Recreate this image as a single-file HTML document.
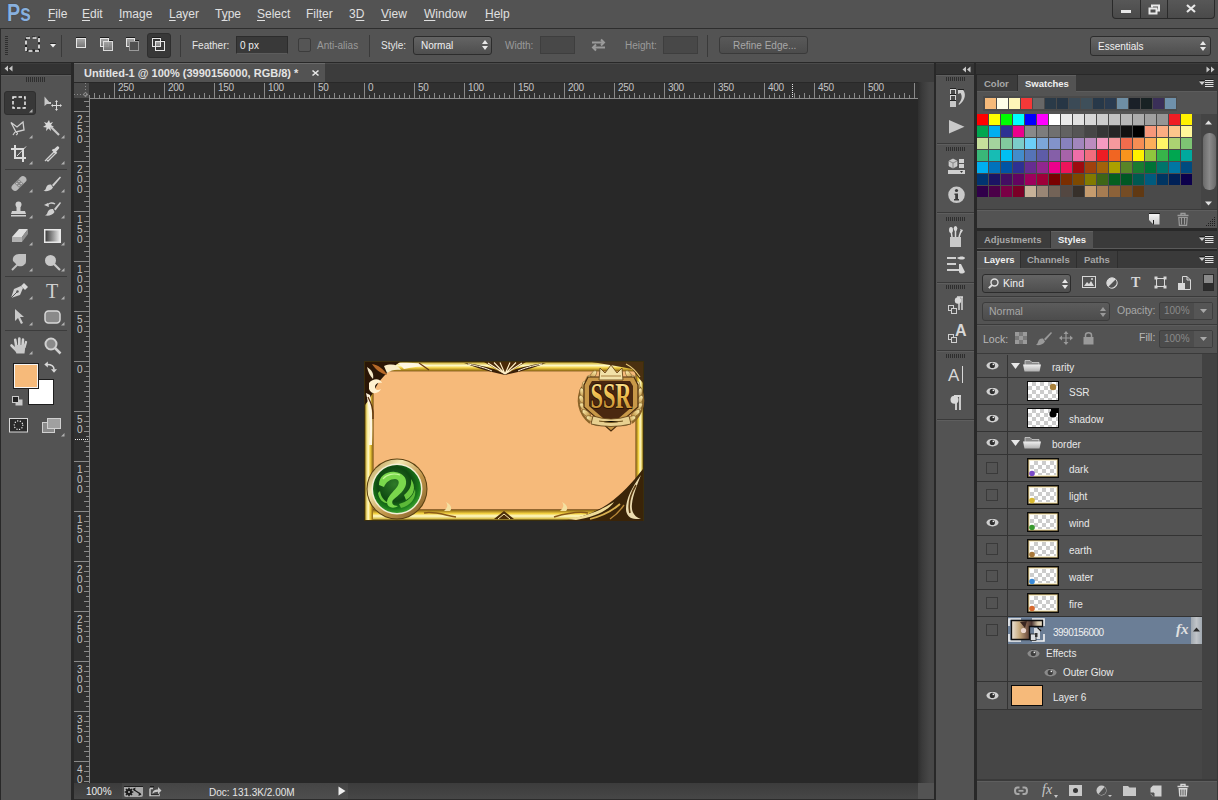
<!DOCTYPE html><html><head><meta charset="utf-8"><style>
*{margin:0;padding:0;box-sizing:border-box}
html,body{width:1218px;height:800px;overflow:hidden;background:#535353;font-family:"Liberation Sans",sans-serif;color:#d6d6d6;font-size:11px}
.a{position:absolute}
.t{position:absolute;white-space:nowrap;line-height:1}
svg{position:absolute;overflow:visible}
</style></head><body>
<div class="a" style="left:0px;top:0px;width:1218px;height:28px;background:#535353;"></div>
<div class="a" style="left:0px;top:28px;width:1218px;height:1px;background:#2e2e2e;"></div>
<div class="t" style="left:7px;top:2px;font-size:23px;color:#88b0dd;letter-spacing:-0.3px;transform:scaleX(.86);transform-origin:0 0;text-shadow:0 0 1px #223"><b>Ps</b></div>
<div class="t" style="left:48px;top:8px;font-size:12px;color:#e0e0e0;text-decoration-thickness:1px;text-underline-offset:2px"><u>F</u>ile</div>
<div class="t" style="left:82px;top:8px;font-size:12px;color:#e0e0e0;text-decoration-thickness:1px;text-underline-offset:2px"><u>E</u>dit</div>
<div class="t" style="left:119px;top:8px;font-size:12px;color:#e0e0e0;text-decoration-thickness:1px;text-underline-offset:2px"><u>I</u>mage</div>
<div class="t" style="left:169px;top:8px;font-size:12px;color:#e0e0e0;text-decoration-thickness:1px;text-underline-offset:2px"><u>L</u>ayer</div>
<div class="t" style="left:215px;top:8px;font-size:12px;color:#e0e0e0;text-decoration-thickness:1px;text-underline-offset:2px">T<u>y</u>pe</div>
<div class="t" style="left:257px;top:8px;font-size:12px;color:#e0e0e0;text-decoration-thickness:1px;text-underline-offset:2px"><u>S</u>elect</div>
<div class="t" style="left:306px;top:8px;font-size:12px;color:#e0e0e0;text-decoration-thickness:1px;text-underline-offset:2px">Fil<u>t</u>er</div>
<div class="t" style="left:349px;top:8px;font-size:12px;color:#e0e0e0;text-decoration-thickness:1px;text-underline-offset:2px">3<u>D</u></div>
<div class="t" style="left:381px;top:8px;font-size:12px;color:#e0e0e0;text-decoration-thickness:1px;text-underline-offset:2px"><u>V</u>iew</div>
<div class="t" style="left:424px;top:8px;font-size:12px;color:#e0e0e0;text-decoration-thickness:1px;text-underline-offset:2px"><u>W</u>indow</div>
<div class="t" style="left:485px;top:8px;font-size:12px;color:#e0e0e0;text-decoration-thickness:1px;text-underline-offset:2px"><u>H</u>elp</div>
<div class="a" style="left:1112px;top:-1px;width:103px;height:20px;background:linear-gradient(#585858,#4a4a4a);border:1px solid #2a2a2a;border-top:none;border-radius:0 0 4px 4px"></div>
<div class="a" style="left:1140px;top:0px;width:1px;height:18px;background:#2a2a2a;"></div>
<div class="a" style="left:1167px;top:0px;width:1px;height:18px;background:#2a2a2a;"></div>
<div class="a" style="left:1121px;top:10px;width:10px;height:3px;background:#e8e8e8;"></div>
<svg style="left:1148px;top:4px;" width="12" height="11" viewBox="0 0 12 11"><rect x="1.5" y="4.5" width="7" height="5" fill="none" stroke="#e8e8e8" stroke-width="2"/><path d="M4 3.5V1.5h7v5h-2" fill="none" stroke="#e8e8e8" stroke-width="2"/></svg>
<svg style="left:1186px;top:4px;" width="10" height="9" viewBox="0 0 10 9"><path d="M1 1L9 8M9 1L1 8" stroke="#e8e8e8" stroke-width="2.2"/></svg>
<div class="a" style="left:0px;top:29px;width:1218px;height:33px;background:#535353;"></div>
<div class="a" style="left:0px;top:29px;width:1px;height:33px;background:#2e2e2e;"></div>
<div class="a" style="left:0px;top:62px;width:1218px;height:1px;background:#282828;"></div>
<div class="a" style="left:5px;top:36px;width:3px;height:1px;background:#2e2e2e;"></div>
<div class="a" style="left:5px;top:38px;width:3px;height:1px;background:#2e2e2e;"></div>
<div class="a" style="left:5px;top:40px;width:3px;height:1px;background:#2e2e2e;"></div>
<div class="a" style="left:5px;top:42px;width:3px;height:1px;background:#2e2e2e;"></div>
<div class="a" style="left:5px;top:44px;width:3px;height:1px;background:#2e2e2e;"></div>
<div class="a" style="left:5px;top:46px;width:3px;height:1px;background:#2e2e2e;"></div>
<div class="a" style="left:5px;top:48px;width:3px;height:1px;background:#2e2e2e;"></div>
<div class="a" style="left:5px;top:50px;width:3px;height:1px;background:#2e2e2e;"></div>
<div class="a" style="left:5px;top:52px;width:3px;height:1px;background:#2e2e2e;"></div>
<div class="a" style="left:5px;top:54px;width:3px;height:1px;background:#2e2e2e;"></div>
<svg style="left:25px;top:37px;" width="15" height="15" viewBox="0 0 15 15"><rect x="1" y="1" width="13" height="13" fill="none" stroke="#1e1e1e" stroke-width="2" stroke-dasharray="3 3" transform="translate(0,-0.5)"/><rect x="1" y="1" width="13" height="13" fill="none" stroke="#f0f0f0" stroke-width="1.6" stroke-dasharray="4 2.5"/></svg>
<svg style="left:50px;top:43px;" width="6" height="5" viewBox="0 0 6 5"><rect x="0" y="0" width="6" height="1" fill="#2a2a2a"/><path d="M0 1H6L3 4.5Z" fill="#f0f0f0"/></svg>
<div class="a" style="left:61px;top:35px;width:1px;height:22px;background:#3a3a3a;"></div>
<svg style="left:75px;top:36px;" width="12" height="13" viewBox="0 0 12 13"><defs><linearGradient id="sg" x1="0" y1="0" x2="0" y2="1"><stop offset="0" stop-color="#a8a8a8"/><stop offset="1" stop-color="#747474"/></linearGradient></defs><rect x="1" y="1" width="10" height="1" fill="#1e1e1e"/><rect x="1.5" y="2.5" width="9" height="9" fill="url(#sg)" stroke="#e6e6e6"/></svg>
<svg style="left:99px;top:36px;" width="15" height="16" viewBox="0 0 15 16"><rect x="1" y="1" width="9" height="1" fill="#1e1e1e"/><rect x="10" y="4" width="4" height="1" fill="#1e1e1e"/><rect x="1.5" y="2.5" width="8" height="8" fill="url(#sg)" stroke="#e6e6e6"/><rect x="4.5" y="5.5" width="9" height="9" fill="url(#sg)" stroke="#e6e6e6" opacity=".92"/></svg>
<svg style="left:125px;top:36px;" width="15" height="16" viewBox="0 0 15 16"><rect x="1" y="1" width="9" height="1" fill="#1e1e1e"/><rect x="10" y="4" width="4" height="1" fill="#1e1e1e"/><rect x="1.5" y="2.5" width="8" height="8" fill="url(#sg)" stroke="#e6e6e6"/><rect x="4.5" y="5.5" width="9" height="9" fill="#505050" stroke="#9a9a9a"/></svg>
<div class="a" style="left:147px;top:33px;width:24px;height:25px;background:#383838;border:1px solid #2e2e2e;border-radius:3px"></div>
<svg style="left:151px;top:36px;" width="15" height="16" viewBox="0 0 15 16"><rect x="1" y="1" width="9" height="1" fill="#1e1e1e"/><rect x="10" y="4" width="4" height="1" fill="#1e1e1e"/><rect x="5" y="6" width="5" height="5" fill="url(#sg)"/><rect x="1.5" y="2.5" width="8" height="8" fill="none" stroke="#e6e6e6"/><rect x="4.5" y="5.5" width="9" height="9" fill="none" stroke="#e6e6e6"/></svg>
<div class="a" style="left:180px;top:35px;width:1px;height:22px;background:#3a3a3a;"></div>
<div class="t" style="left:192px;top:41px;font-size:10px;color:#e6e6e6;">Feather:</div>
<div class="a" style="left:236px;top:36px;width:52px;height:18px;background:#393939;border:1px solid #2c2c2c;border-bottom-color:#5c5c5c"></div>
<div class="t" style="left:240px;top:41px;font-size:10px;color:#f0f0f0;">0 px</div>
<div class="a" style="left:298px;top:38px;width:13px;height:14px;background:#555;border:1px solid #3c3c3c;border-radius:2px"></div>
<div class="t" style="left:317px;top:41px;font-size:10px;color:#9a9a9a;">Anti-alias</div>
<div class="a" style="left:369px;top:35px;width:1px;height:22px;background:#3a3a3a;"></div>
<div class="t" style="left:381px;top:41px;font-size:10px;color:#e6e6e6;">Style:</div>
<div class="a" style="left:413px;top:36px;width:79px;height:19px;background:linear-gradient(#646464,#4e4e4e);border:1px solid #2c2c2c;border-radius:3px"></div>
<div class="t" style="left:421px;top:41px;font-size:10px;color:#f0f0f0;">Normal</div>
<svg style="left:482px;top:39px;" width="6" height="12" viewBox="0 0 6 12"><path d="M0 5L3 1L6 5ZM0 7L3 11L6 7Z" fill="#e8e8e8"/></svg>
<div class="t" style="left:505px;top:41px;font-size:10px;color:#9a9a9a;">Width:</div>
<div class="a" style="left:540px;top:36px;width:35px;height:18px;background:#484848;border:1px solid #3e3e3e"></div>
<svg style="left:590px;top:38px;" width="17" height="14" viewBox="0 0 17 14"><path d="M2 4.5H14M11 1.5L14 4.5L11 7.5" fill="none" stroke="#9a9a9a" stroke-width="2"/><path d="M15 9.5H3M6 6.5L3 9.5L6 12.5" fill="none" stroke="#9a9a9a" stroke-width="2"/></svg>
<div class="t" style="left:625px;top:41px;font-size:10px;color:#9a9a9a;">Height:</div>
<div class="a" style="left:663px;top:36px;width:35px;height:18px;background:#484848;border:1px solid #3e3e3e"></div>
<div class="a" style="left:707px;top:35px;width:1px;height:22px;background:#3a3a3a;"></div>
<div class="a" style="left:719px;top:36px;width:89px;height:18px;background:linear-gradient(#595959,#4c4c4c);border:1px solid #3a3a3a;border-radius:3px"></div>
<div class="t" style="left:733px;top:41px;font-size:10px;color:#a8a8a8;">Refine Edge...</div>
<div class="a" style="left:1090px;top:36px;width:121px;height:20px;background:linear-gradient(#646464,#4e4e4e);border:1px solid #2c2c2c;border-radius:3px"></div>
<div class="t" style="left:1098px;top:42px;font-size:10px;color:#f0f0f0;">Essentials</div>
<svg style="left:1200px;top:40px;" width="6" height="12" viewBox="0 0 6 12"><path d="M0 5L3 1L6 5ZM0 7L3 11L6 7Z" fill="#e8e8e8"/></svg>
<div class="a" style="left:0px;top:63px;width:1218px;height:737px;background:#282828;"></div>
<div class="a" style="left:1px;top:63px;width:70px;height:11px;background:linear-gradient(#3c3c3c 0,#3c3c3c 1px,#333 1px);"></div>
<div class="a" style="left:1px;top:75px;width:70px;height:725px;background:linear-gradient(#5e5e5e 0,#5e5e5e 1px,#535353 1px);"></div>
<div class="a" style="left:74px;top:63px;width:860px;height:19px;background:linear-gradient(#4a4a4a 0,#4a4a4a 1px,#3c3c3c 1px);"></div>
<div class="a" style="left:74px;top:63px;width:251px;height:19px;background:linear-gradient(#6a6a6a 0,#6a6a6a 1px,#535353 1px);"></div>
<div class="t" style="left:84px;top:68px;font-size:11px;color:#e4e4e4;"><b>Untitled-1 @ 100% (3990156000, RGB/8) *</b></div>
<svg style="left:312px;top:70px;" width="7" height="6" viewBox="0 0 7 6"><path d="M0.5 0.5L6.5 5.5M6.5 0.5L0.5 5.5" stroke="#e8e8e8" stroke-width="1.6"/></svg>
<div class="a" style="left:74px;top:82px;width:844px;height:16px;background:#303030;"></div>
<div class="a" style="left:74px;top:82px;width:844px;height:1px;background:#282828;"></div>
<div class="a" style="left:74px;top:98px;width:15px;height:685px;background:#303030;"></div>
<div class="a" style="left:90px;top:99px;width:828px;height:684px;background:#282828;"></div>
<div class="a" style="left:74px;top:83px;width:15px;height:15px;background:#4a4a4a;"></div>
<svg style="left:74px;top:83px;" width="15" height="15" viewBox="0 0 15 15"><path d="M0 11.5H15M11.5 0V15" stroke="#8a8a8a" stroke-dasharray="1 2"/><rect x="10" y="10" width="3" height="3" fill="none" stroke="#8a8a8a" transform="rotate(45 11.5 11.5)"/></svg>
<div class="a" style="left:89px;top:98px;width:829px;height:1px;background:#8a8a8a;"></div>
<div class="a" style="left:89px;top:98px;width:1px;height:685px;background:#8a8a8a;"></div>
<svg style="left:89px;top:83px;" width="829" height="15" viewBox="0 0 829 15"><rect x="0" y="12" width="1" height="3" fill="#8a8a8a"/><rect x="5" y="10" width="1" height="5" fill="#8a8a8a"/><rect x="10" y="12" width="1" height="3" fill="#8a8a8a"/><rect x="15" y="10" width="1" height="5" fill="#8a8a8a"/><rect x="20" y="12" width="1" height="3" fill="#8a8a8a"/><rect x="25" y="0" width="1" height="15" fill="#8a8a8a"/><rect x="30" y="12" width="1" height="3" fill="#8a8a8a"/><rect x="35" y="10" width="1" height="5" fill="#8a8a8a"/><rect x="40" y="12" width="1" height="3" fill="#8a8a8a"/><rect x="45" y="10" width="1" height="5" fill="#8a8a8a"/><rect x="50" y="12" width="1" height="3" fill="#8a8a8a"/><rect x="55" y="10" width="1" height="5" fill="#8a8a8a"/><rect x="60" y="12" width="1" height="3" fill="#8a8a8a"/><rect x="65" y="10" width="1" height="5" fill="#8a8a8a"/><rect x="70" y="12" width="1" height="3" fill="#8a8a8a"/><rect x="75" y="0" width="1" height="15" fill="#8a8a8a"/><rect x="80" y="12" width="1" height="3" fill="#8a8a8a"/><rect x="85" y="10" width="1" height="5" fill="#8a8a8a"/><rect x="90" y="12" width="1" height="3" fill="#8a8a8a"/><rect x="95" y="10" width="1" height="5" fill="#8a8a8a"/><rect x="100" y="12" width="1" height="3" fill="#8a8a8a"/><rect x="105" y="10" width="1" height="5" fill="#8a8a8a"/><rect x="110" y="12" width="1" height="3" fill="#8a8a8a"/><rect x="115" y="10" width="1" height="5" fill="#8a8a8a"/><rect x="120" y="12" width="1" height="3" fill="#8a8a8a"/><rect x="125" y="0" width="1" height="15" fill="#8a8a8a"/><rect x="130" y="12" width="1" height="3" fill="#8a8a8a"/><rect x="135" y="10" width="1" height="5" fill="#8a8a8a"/><rect x="140" y="12" width="1" height="3" fill="#8a8a8a"/><rect x="145" y="10" width="1" height="5" fill="#8a8a8a"/><rect x="150" y="12" width="1" height="3" fill="#8a8a8a"/><rect x="155" y="10" width="1" height="5" fill="#8a8a8a"/><rect x="160" y="12" width="1" height="3" fill="#8a8a8a"/><rect x="165" y="10" width="1" height="5" fill="#8a8a8a"/><rect x="170" y="12" width="1" height="3" fill="#8a8a8a"/><rect x="175" y="0" width="1" height="15" fill="#8a8a8a"/><rect x="180" y="12" width="1" height="3" fill="#8a8a8a"/><rect x="185" y="10" width="1" height="5" fill="#8a8a8a"/><rect x="190" y="12" width="1" height="3" fill="#8a8a8a"/><rect x="195" y="10" width="1" height="5" fill="#8a8a8a"/><rect x="200" y="12" width="1" height="3" fill="#8a8a8a"/><rect x="205" y="10" width="1" height="5" fill="#8a8a8a"/><rect x="210" y="12" width="1" height="3" fill="#8a8a8a"/><rect x="215" y="10" width="1" height="5" fill="#8a8a8a"/><rect x="220" y="12" width="1" height="3" fill="#8a8a8a"/><rect x="225" y="0" width="1" height="15" fill="#8a8a8a"/><rect x="230" y="12" width="1" height="3" fill="#8a8a8a"/><rect x="235" y="10" width="1" height="5" fill="#8a8a8a"/><rect x="240" y="12" width="1" height="3" fill="#8a8a8a"/><rect x="245" y="10" width="1" height="5" fill="#8a8a8a"/><rect x="250" y="12" width="1" height="3" fill="#8a8a8a"/><rect x="255" y="10" width="1" height="5" fill="#8a8a8a"/><rect x="260" y="12" width="1" height="3" fill="#8a8a8a"/><rect x="265" y="10" width="1" height="5" fill="#8a8a8a"/><rect x="270" y="12" width="1" height="3" fill="#8a8a8a"/><rect x="275" y="0" width="1" height="15" fill="#8a8a8a"/><rect x="280" y="12" width="1" height="3" fill="#8a8a8a"/><rect x="285" y="10" width="1" height="5" fill="#8a8a8a"/><rect x="290" y="12" width="1" height="3" fill="#8a8a8a"/><rect x="295" y="10" width="1" height="5" fill="#8a8a8a"/><rect x="300" y="12" width="1" height="3" fill="#8a8a8a"/><rect x="305" y="10" width="1" height="5" fill="#8a8a8a"/><rect x="310" y="12" width="1" height="3" fill="#8a8a8a"/><rect x="315" y="10" width="1" height="5" fill="#8a8a8a"/><rect x="320" y="12" width="1" height="3" fill="#8a8a8a"/><rect x="325" y="0" width="1" height="15" fill="#8a8a8a"/><rect x="330" y="12" width="1" height="3" fill="#8a8a8a"/><rect x="335" y="10" width="1" height="5" fill="#8a8a8a"/><rect x="340" y="12" width="1" height="3" fill="#8a8a8a"/><rect x="345" y="10" width="1" height="5" fill="#8a8a8a"/><rect x="350" y="12" width="1" height="3" fill="#8a8a8a"/><rect x="355" y="10" width="1" height="5" fill="#8a8a8a"/><rect x="360" y="12" width="1" height="3" fill="#8a8a8a"/><rect x="365" y="10" width="1" height="5" fill="#8a8a8a"/><rect x="370" y="12" width="1" height="3" fill="#8a8a8a"/><rect x="375" y="0" width="1" height="15" fill="#8a8a8a"/><rect x="380" y="12" width="1" height="3" fill="#8a8a8a"/><rect x="385" y="10" width="1" height="5" fill="#8a8a8a"/><rect x="390" y="12" width="1" height="3" fill="#8a8a8a"/><rect x="395" y="10" width="1" height="5" fill="#8a8a8a"/><rect x="400" y="12" width="1" height="3" fill="#8a8a8a"/><rect x="405" y="10" width="1" height="5" fill="#8a8a8a"/><rect x="410" y="12" width="1" height="3" fill="#8a8a8a"/><rect x="415" y="10" width="1" height="5" fill="#8a8a8a"/><rect x="420" y="12" width="1" height="3" fill="#8a8a8a"/><rect x="425" y="0" width="1" height="15" fill="#8a8a8a"/><rect x="430" y="12" width="1" height="3" fill="#8a8a8a"/><rect x="435" y="10" width="1" height="5" fill="#8a8a8a"/><rect x="440" y="12" width="1" height="3" fill="#8a8a8a"/><rect x="445" y="10" width="1" height="5" fill="#8a8a8a"/><rect x="450" y="12" width="1" height="3" fill="#8a8a8a"/><rect x="455" y="10" width="1" height="5" fill="#8a8a8a"/><rect x="460" y="12" width="1" height="3" fill="#8a8a8a"/><rect x="465" y="10" width="1" height="5" fill="#8a8a8a"/><rect x="470" y="12" width="1" height="3" fill="#8a8a8a"/><rect x="475" y="0" width="1" height="15" fill="#8a8a8a"/><rect x="480" y="12" width="1" height="3" fill="#8a8a8a"/><rect x="485" y="10" width="1" height="5" fill="#8a8a8a"/><rect x="490" y="12" width="1" height="3" fill="#8a8a8a"/><rect x="495" y="10" width="1" height="5" fill="#8a8a8a"/><rect x="500" y="12" width="1" height="3" fill="#8a8a8a"/><rect x="505" y="10" width="1" height="5" fill="#8a8a8a"/><rect x="510" y="12" width="1" height="3" fill="#8a8a8a"/><rect x="515" y="10" width="1" height="5" fill="#8a8a8a"/><rect x="520" y="12" width="1" height="3" fill="#8a8a8a"/><rect x="525" y="0" width="1" height="15" fill="#8a8a8a"/><rect x="530" y="12" width="1" height="3" fill="#8a8a8a"/><rect x="535" y="10" width="1" height="5" fill="#8a8a8a"/><rect x="540" y="12" width="1" height="3" fill="#8a8a8a"/><rect x="545" y="10" width="1" height="5" fill="#8a8a8a"/><rect x="550" y="12" width="1" height="3" fill="#8a8a8a"/><rect x="555" y="10" width="1" height="5" fill="#8a8a8a"/><rect x="560" y="12" width="1" height="3" fill="#8a8a8a"/><rect x="565" y="10" width="1" height="5" fill="#8a8a8a"/><rect x="570" y="12" width="1" height="3" fill="#8a8a8a"/><rect x="575" y="0" width="1" height="15" fill="#8a8a8a"/><rect x="580" y="12" width="1" height="3" fill="#8a8a8a"/><rect x="585" y="10" width="1" height="5" fill="#8a8a8a"/><rect x="590" y="12" width="1" height="3" fill="#8a8a8a"/><rect x="595" y="10" width="1" height="5" fill="#8a8a8a"/><rect x="600" y="12" width="1" height="3" fill="#8a8a8a"/><rect x="605" y="10" width="1" height="5" fill="#8a8a8a"/><rect x="610" y="12" width="1" height="3" fill="#8a8a8a"/><rect x="615" y="10" width="1" height="5" fill="#8a8a8a"/><rect x="620" y="12" width="1" height="3" fill="#8a8a8a"/><rect x="625" y="0" width="1" height="15" fill="#8a8a8a"/><rect x="630" y="12" width="1" height="3" fill="#8a8a8a"/><rect x="635" y="10" width="1" height="5" fill="#8a8a8a"/><rect x="640" y="12" width="1" height="3" fill="#8a8a8a"/><rect x="645" y="10" width="1" height="5" fill="#8a8a8a"/><rect x="650" y="12" width="1" height="3" fill="#8a8a8a"/><rect x="655" y="10" width="1" height="5" fill="#8a8a8a"/><rect x="660" y="12" width="1" height="3" fill="#8a8a8a"/><rect x="665" y="10" width="1" height="5" fill="#8a8a8a"/><rect x="670" y="12" width="1" height="3" fill="#8a8a8a"/><rect x="675" y="0" width="1" height="15" fill="#8a8a8a"/><rect x="680" y="12" width="1" height="3" fill="#8a8a8a"/><rect x="685" y="10" width="1" height="5" fill="#8a8a8a"/><rect x="690" y="12" width="1" height="3" fill="#8a8a8a"/><rect x="695" y="10" width="1" height="5" fill="#8a8a8a"/><rect x="700" y="12" width="1" height="3" fill="#8a8a8a"/><rect x="705" y="10" width="1" height="5" fill="#8a8a8a"/><rect x="710" y="12" width="1" height="3" fill="#8a8a8a"/><rect x="715" y="10" width="1" height="5" fill="#8a8a8a"/><rect x="720" y="12" width="1" height="3" fill="#8a8a8a"/><rect x="725" y="0" width="1" height="15" fill="#8a8a8a"/><rect x="730" y="12" width="1" height="3" fill="#8a8a8a"/><rect x="735" y="10" width="1" height="5" fill="#8a8a8a"/><rect x="740" y="12" width="1" height="3" fill="#8a8a8a"/><rect x="745" y="10" width="1" height="5" fill="#8a8a8a"/><rect x="750" y="12" width="1" height="3" fill="#8a8a8a"/><rect x="755" y="10" width="1" height="5" fill="#8a8a8a"/><rect x="760" y="12" width="1" height="3" fill="#8a8a8a"/><rect x="765" y="10" width="1" height="5" fill="#8a8a8a"/><rect x="770" y="12" width="1" height="3" fill="#8a8a8a"/><rect x="775" y="0" width="1" height="15" fill="#8a8a8a"/><rect x="780" y="12" width="1" height="3" fill="#8a8a8a"/><rect x="785" y="10" width="1" height="5" fill="#8a8a8a"/><rect x="790" y="12" width="1" height="3" fill="#8a8a8a"/><rect x="795" y="10" width="1" height="5" fill="#8a8a8a"/><rect x="800" y="12" width="1" height="3" fill="#8a8a8a"/><rect x="805" y="10" width="1" height="5" fill="#8a8a8a"/><rect x="810" y="12" width="1" height="3" fill="#8a8a8a"/><rect x="815" y="10" width="1" height="5" fill="#8a8a8a"/><rect x="820" y="12" width="1" height="3" fill="#8a8a8a"/><rect x="825" y="0" width="1" height="15" fill="#8a8a8a"/></svg>
<div class="t" style="left:118px;top:83px;font-size:10px;color:#c4c4c4;letter-spacing:-0.3px">250</div>
<div class="t" style="left:168px;top:83px;font-size:10px;color:#c4c4c4;letter-spacing:-0.3px">200</div>
<div class="t" style="left:218px;top:83px;font-size:10px;color:#c4c4c4;letter-spacing:-0.3px">150</div>
<div class="t" style="left:268px;top:83px;font-size:10px;color:#c4c4c4;letter-spacing:-0.3px">100</div>
<div class="t" style="left:318px;top:83px;font-size:10px;color:#c4c4c4;letter-spacing:-0.3px">50</div>
<div class="t" style="left:368px;top:83px;font-size:10px;color:#c4c4c4;letter-spacing:-0.3px">0</div>
<div class="t" style="left:418px;top:83px;font-size:10px;color:#c4c4c4;letter-spacing:-0.3px">50</div>
<div class="t" style="left:468px;top:83px;font-size:10px;color:#c4c4c4;letter-spacing:-0.3px">100</div>
<div class="t" style="left:518px;top:83px;font-size:10px;color:#c4c4c4;letter-spacing:-0.3px">150</div>
<div class="t" style="left:568px;top:83px;font-size:10px;color:#c4c4c4;letter-spacing:-0.3px">200</div>
<div class="t" style="left:618px;top:83px;font-size:10px;color:#c4c4c4;letter-spacing:-0.3px">250</div>
<div class="t" style="left:668px;top:83px;font-size:10px;color:#c4c4c4;letter-spacing:-0.3px">300</div>
<div class="t" style="left:718px;top:83px;font-size:10px;color:#c4c4c4;letter-spacing:-0.3px">350</div>
<div class="t" style="left:768px;top:83px;font-size:10px;color:#c4c4c4;letter-spacing:-0.3px">400</div>
<div class="t" style="left:818px;top:83px;font-size:10px;color:#c4c4c4;letter-spacing:-0.3px">450</div>
<div class="t" style="left:868px;top:83px;font-size:10px;color:#c4c4c4;letter-spacing:-0.3px">500</div>
<svg style="left:74px;top:98px;" width="15" height="685" viewBox="0 0 15 685"><rect x="10" y="3" width="5" height="1" fill="#8a8a8a"/><rect x="12" y="8" width="3" height="1" fill="#8a8a8a"/><rect x="0" y="13" width="15" height="1" fill="#8a8a8a"/><rect x="12" y="18" width="3" height="1" fill="#8a8a8a"/><rect x="10" y="23" width="5" height="1" fill="#8a8a8a"/><rect x="12" y="28" width="3" height="1" fill="#8a8a8a"/><rect x="10" y="33" width="5" height="1" fill="#8a8a8a"/><rect x="12" y="38" width="3" height="1" fill="#8a8a8a"/><rect x="10" y="43" width="5" height="1" fill="#8a8a8a"/><rect x="12" y="48" width="3" height="1" fill="#8a8a8a"/><rect x="10" y="53" width="5" height="1" fill="#8a8a8a"/><rect x="12" y="58" width="3" height="1" fill="#8a8a8a"/><rect x="0" y="63" width="15" height="1" fill="#8a8a8a"/><rect x="12" y="68" width="3" height="1" fill="#8a8a8a"/><rect x="10" y="73" width="5" height="1" fill="#8a8a8a"/><rect x="12" y="78" width="3" height="1" fill="#8a8a8a"/><rect x="10" y="83" width="5" height="1" fill="#8a8a8a"/><rect x="12" y="88" width="3" height="1" fill="#8a8a8a"/><rect x="10" y="93" width="5" height="1" fill="#8a8a8a"/><rect x="12" y="98" width="3" height="1" fill="#8a8a8a"/><rect x="10" y="103" width="5" height="1" fill="#8a8a8a"/><rect x="12" y="108" width="3" height="1" fill="#8a8a8a"/><rect x="0" y="113" width="15" height="1" fill="#8a8a8a"/><rect x="12" y="118" width="3" height="1" fill="#8a8a8a"/><rect x="10" y="123" width="5" height="1" fill="#8a8a8a"/><rect x="12" y="128" width="3" height="1" fill="#8a8a8a"/><rect x="10" y="133" width="5" height="1" fill="#8a8a8a"/><rect x="12" y="138" width="3" height="1" fill="#8a8a8a"/><rect x="10" y="143" width="5" height="1" fill="#8a8a8a"/><rect x="12" y="148" width="3" height="1" fill="#8a8a8a"/><rect x="10" y="153" width="5" height="1" fill="#8a8a8a"/><rect x="12" y="158" width="3" height="1" fill="#8a8a8a"/><rect x="0" y="163" width="15" height="1" fill="#8a8a8a"/><rect x="12" y="168" width="3" height="1" fill="#8a8a8a"/><rect x="10" y="173" width="5" height="1" fill="#8a8a8a"/><rect x="12" y="178" width="3" height="1" fill="#8a8a8a"/><rect x="10" y="183" width="5" height="1" fill="#8a8a8a"/><rect x="12" y="188" width="3" height="1" fill="#8a8a8a"/><rect x="10" y="193" width="5" height="1" fill="#8a8a8a"/><rect x="12" y="198" width="3" height="1" fill="#8a8a8a"/><rect x="10" y="203" width="5" height="1" fill="#8a8a8a"/><rect x="12" y="208" width="3" height="1" fill="#8a8a8a"/><rect x="0" y="213" width="15" height="1" fill="#8a8a8a"/><rect x="12" y="218" width="3" height="1" fill="#8a8a8a"/><rect x="10" y="223" width="5" height="1" fill="#8a8a8a"/><rect x="12" y="228" width="3" height="1" fill="#8a8a8a"/><rect x="10" y="233" width="5" height="1" fill="#8a8a8a"/><rect x="12" y="238" width="3" height="1" fill="#8a8a8a"/><rect x="10" y="243" width="5" height="1" fill="#8a8a8a"/><rect x="12" y="248" width="3" height="1" fill="#8a8a8a"/><rect x="10" y="253" width="5" height="1" fill="#8a8a8a"/><rect x="12" y="258" width="3" height="1" fill="#8a8a8a"/><rect x="0" y="263" width="15" height="1" fill="#8a8a8a"/><rect x="12" y="268" width="3" height="1" fill="#8a8a8a"/><rect x="10" y="273" width="5" height="1" fill="#8a8a8a"/><rect x="12" y="278" width="3" height="1" fill="#8a8a8a"/><rect x="10" y="283" width="5" height="1" fill="#8a8a8a"/><rect x="12" y="288" width="3" height="1" fill="#8a8a8a"/><rect x="10" y="293" width="5" height="1" fill="#8a8a8a"/><rect x="12" y="298" width="3" height="1" fill="#8a8a8a"/><rect x="10" y="303" width="5" height="1" fill="#8a8a8a"/><rect x="12" y="308" width="3" height="1" fill="#8a8a8a"/><rect x="0" y="313" width="15" height="1" fill="#8a8a8a"/><rect x="12" y="318" width="3" height="1" fill="#8a8a8a"/><rect x="10" y="323" width="5" height="1" fill="#8a8a8a"/><rect x="12" y="328" width="3" height="1" fill="#8a8a8a"/><rect x="10" y="333" width="5" height="1" fill="#8a8a8a"/><rect x="12" y="338" width="3" height="1" fill="#8a8a8a"/><rect x="10" y="343" width="5" height="1" fill="#8a8a8a"/><rect x="12" y="348" width="3" height="1" fill="#8a8a8a"/><rect x="10" y="353" width="5" height="1" fill="#8a8a8a"/><rect x="12" y="358" width="3" height="1" fill="#8a8a8a"/><rect x="0" y="363" width="15" height="1" fill="#8a8a8a"/><rect x="12" y="368" width="3" height="1" fill="#8a8a8a"/><rect x="10" y="373" width="5" height="1" fill="#8a8a8a"/><rect x="12" y="378" width="3" height="1" fill="#8a8a8a"/><rect x="10" y="383" width="5" height="1" fill="#8a8a8a"/><rect x="12" y="388" width="3" height="1" fill="#8a8a8a"/><rect x="10" y="393" width="5" height="1" fill="#8a8a8a"/><rect x="12" y="398" width="3" height="1" fill="#8a8a8a"/><rect x="10" y="403" width="5" height="1" fill="#8a8a8a"/><rect x="12" y="408" width="3" height="1" fill="#8a8a8a"/><rect x="0" y="413" width="15" height="1" fill="#8a8a8a"/><rect x="12" y="418" width="3" height="1" fill="#8a8a8a"/><rect x="10" y="423" width="5" height="1" fill="#8a8a8a"/><rect x="12" y="428" width="3" height="1" fill="#8a8a8a"/><rect x="10" y="433" width="5" height="1" fill="#8a8a8a"/><rect x="12" y="438" width="3" height="1" fill="#8a8a8a"/><rect x="10" y="443" width="5" height="1" fill="#8a8a8a"/><rect x="12" y="448" width="3" height="1" fill="#8a8a8a"/><rect x="10" y="453" width="5" height="1" fill="#8a8a8a"/><rect x="12" y="458" width="3" height="1" fill="#8a8a8a"/><rect x="0" y="463" width="15" height="1" fill="#8a8a8a"/><rect x="12" y="468" width="3" height="1" fill="#8a8a8a"/><rect x="10" y="473" width="5" height="1" fill="#8a8a8a"/><rect x="12" y="478" width="3" height="1" fill="#8a8a8a"/><rect x="10" y="483" width="5" height="1" fill="#8a8a8a"/><rect x="12" y="488" width="3" height="1" fill="#8a8a8a"/><rect x="10" y="493" width="5" height="1" fill="#8a8a8a"/><rect x="12" y="498" width="3" height="1" fill="#8a8a8a"/><rect x="10" y="503" width="5" height="1" fill="#8a8a8a"/><rect x="12" y="508" width="3" height="1" fill="#8a8a8a"/><rect x="0" y="513" width="15" height="1" fill="#8a8a8a"/><rect x="12" y="518" width="3" height="1" fill="#8a8a8a"/><rect x="10" y="523" width="5" height="1" fill="#8a8a8a"/><rect x="12" y="528" width="3" height="1" fill="#8a8a8a"/><rect x="10" y="533" width="5" height="1" fill="#8a8a8a"/><rect x="12" y="538" width="3" height="1" fill="#8a8a8a"/><rect x="10" y="543" width="5" height="1" fill="#8a8a8a"/><rect x="12" y="548" width="3" height="1" fill="#8a8a8a"/><rect x="10" y="553" width="5" height="1" fill="#8a8a8a"/><rect x="12" y="558" width="3" height="1" fill="#8a8a8a"/><rect x="0" y="563" width="15" height="1" fill="#8a8a8a"/><rect x="12" y="568" width="3" height="1" fill="#8a8a8a"/><rect x="10" y="573" width="5" height="1" fill="#8a8a8a"/><rect x="12" y="578" width="3" height="1" fill="#8a8a8a"/><rect x="10" y="583" width="5" height="1" fill="#8a8a8a"/><rect x="12" y="588" width="3" height="1" fill="#8a8a8a"/><rect x="10" y="593" width="5" height="1" fill="#8a8a8a"/><rect x="12" y="598" width="3" height="1" fill="#8a8a8a"/><rect x="10" y="603" width="5" height="1" fill="#8a8a8a"/><rect x="12" y="608" width="3" height="1" fill="#8a8a8a"/><rect x="0" y="613" width="15" height="1" fill="#8a8a8a"/><rect x="12" y="618" width="3" height="1" fill="#8a8a8a"/><rect x="10" y="623" width="5" height="1" fill="#8a8a8a"/><rect x="12" y="628" width="3" height="1" fill="#8a8a8a"/><rect x="10" y="633" width="5" height="1" fill="#8a8a8a"/><rect x="12" y="638" width="3" height="1" fill="#8a8a8a"/><rect x="10" y="643" width="5" height="1" fill="#8a8a8a"/><rect x="12" y="648" width="3" height="1" fill="#8a8a8a"/><rect x="10" y="653" width="5" height="1" fill="#8a8a8a"/><rect x="12" y="658" width="3" height="1" fill="#8a8a8a"/><rect x="0" y="663" width="15" height="1" fill="#8a8a8a"/><rect x="12" y="668" width="3" height="1" fill="#8a8a8a"/><rect x="10" y="673" width="5" height="1" fill="#8a8a8a"/><rect x="12" y="678" width="3" height="1" fill="#8a8a8a"/><rect x="10" y="683" width="5" height="1" fill="#8a8a8a"/></svg>
<div class="t" style="left:77px;top:115px;font-size:10px;color:#c4c4c4;">2</div>
<div class="t" style="left:77px;top:125px;font-size:10px;color:#c4c4c4;">5</div>
<div class="t" style="left:77px;top:135px;font-size:10px;color:#c4c4c4;">0</div>
<div class="t" style="left:77px;top:165px;font-size:10px;color:#c4c4c4;">2</div>
<div class="t" style="left:77px;top:175px;font-size:10px;color:#c4c4c4;">0</div>
<div class="t" style="left:77px;top:185px;font-size:10px;color:#c4c4c4;">0</div>
<div class="t" style="left:77px;top:215px;font-size:10px;color:#c4c4c4;">1</div>
<div class="t" style="left:77px;top:225px;font-size:10px;color:#c4c4c4;">5</div>
<div class="t" style="left:77px;top:235px;font-size:10px;color:#c4c4c4;">0</div>
<div class="t" style="left:77px;top:265px;font-size:10px;color:#c4c4c4;">1</div>
<div class="t" style="left:77px;top:275px;font-size:10px;color:#c4c4c4;">0</div>
<div class="t" style="left:77px;top:285px;font-size:10px;color:#c4c4c4;">0</div>
<div class="t" style="left:77px;top:315px;font-size:10px;color:#c4c4c4;">5</div>
<div class="t" style="left:77px;top:325px;font-size:10px;color:#c4c4c4;">0</div>
<div class="t" style="left:77px;top:365px;font-size:10px;color:#c4c4c4;">0</div>
<div class="t" style="left:77px;top:415px;font-size:10px;color:#c4c4c4;">5</div>
<div class="t" style="left:77px;top:425px;font-size:10px;color:#c4c4c4;">0</div>
<div class="t" style="left:77px;top:465px;font-size:10px;color:#c4c4c4;">1</div>
<div class="t" style="left:77px;top:475px;font-size:10px;color:#c4c4c4;">0</div>
<div class="t" style="left:77px;top:485px;font-size:10px;color:#c4c4c4;">0</div>
<div class="t" style="left:77px;top:515px;font-size:10px;color:#c4c4c4;">1</div>
<div class="t" style="left:77px;top:525px;font-size:10px;color:#c4c4c4;">5</div>
<div class="t" style="left:77px;top:535px;font-size:10px;color:#c4c4c4;">0</div>
<div class="t" style="left:77px;top:565px;font-size:10px;color:#c4c4c4;">2</div>
<div class="t" style="left:77px;top:575px;font-size:10px;color:#c4c4c4;">0</div>
<div class="t" style="left:77px;top:585px;font-size:10px;color:#c4c4c4;">0</div>
<div class="t" style="left:77px;top:615px;font-size:10px;color:#c4c4c4;">2</div>
<div class="t" style="left:77px;top:625px;font-size:10px;color:#c4c4c4;">5</div>
<div class="t" style="left:77px;top:635px;font-size:10px;color:#c4c4c4;">0</div>
<div class="t" style="left:77px;top:665px;font-size:10px;color:#c4c4c4;">3</div>
<div class="t" style="left:77px;top:675px;font-size:10px;color:#c4c4c4;">0</div>
<div class="t" style="left:77px;top:685px;font-size:10px;color:#c4c4c4;">0</div>
<div class="t" style="left:77px;top:715px;font-size:10px;color:#c4c4c4;">3</div>
<div class="t" style="left:77px;top:725px;font-size:10px;color:#c4c4c4;">5</div>
<div class="t" style="left:77px;top:735px;font-size:10px;color:#c4c4c4;">0</div>
<div class="t" style="left:77px;top:765px;font-size:10px;color:#c4c4c4;">4</div>
<div class="t" style="left:77px;top:775px;font-size:10px;color:#c4c4c4;">0</div>
<div class="a" style="left:90px;top:99px;width:828px;height:684px;background:#282828;"></div>
<div class="a" style="left:792px;top:84px;width:1px;height:1px;background:#e8e8e8;"></div>
<div class="a" style="left:792px;top:86px;width:1px;height:1px;background:#e8e8e8;"></div>
<div class="a" style="left:792px;top:88px;width:1px;height:1px;background:#e8e8e8;"></div>
<div class="a" style="left:792px;top:90px;width:1px;height:1px;background:#e8e8e8;"></div>
<div class="a" style="left:792px;top:92px;width:1px;height:1px;background:#e8e8e8;"></div>
<div class="a" style="left:792px;top:94px;width:1px;height:1px;background:#e8e8e8;"></div>
<div class="a" style="left:792px;top:96px;width:1px;height:1px;background:#e8e8e8;"></div>
<div class="a" style="left:792px;top:83px;width:1px;height:15px;background:transparent;"></div>
<div class="a" style="left:75px;top:439px;width:1px;height:1px;background:#e8e8e8;"></div>
<div class="a" style="left:77px;top:439px;width:1px;height:1px;background:#e8e8e8;"></div>
<div class="a" style="left:79px;top:439px;width:1px;height:1px;background:#e8e8e8;"></div>
<div class="a" style="left:81px;top:439px;width:1px;height:1px;background:#e8e8e8;"></div>
<div class="a" style="left:83px;top:439px;width:1px;height:1px;background:#e8e8e8;"></div>
<div class="a" style="left:85px;top:439px;width:1px;height:1px;background:#e8e8e8;"></div>
<div class="a" style="left:87px;top:439px;width:1px;height:1px;background:#e8e8e8;"></div>
<svg style="left:364px;top:361px;" width="280" height="160" viewBox="0 0 280 160">
<defs>
<linearGradient id="gv" x1="0" y1="0" x2="0" y2="1"><stop offset="0" stop-color="#5a4612"/><stop offset=".12" stop-color="#d8be48"/><stop offset=".4" stop-color="#fffac8"/><stop offset=".65" stop-color="#f2d040"/><stop offset="1" stop-color="#8a6414"/></linearGradient>
<linearGradient id="gh" x1="0" y1="0" x2="1" y2="0"><stop offset="0" stop-color="#5a4612"/><stop offset=".12" stop-color="#d8be48"/><stop offset=".4" stop-color="#fffac8"/><stop offset=".65" stop-color="#f2d040"/><stop offset="1" stop-color="#8a6414"/></linearGradient>
<linearGradient id="gb" x1="0" y1="0" x2="0" y2="1"><stop offset="0" stop-color="#8a6414"/><stop offset=".35" stop-color="#f2d040"/><stop offset=".6" stop-color="#fffac8"/><stop offset=".88" stop-color="#d8be48"/><stop offset="1" stop-color="#5a4612"/></linearGradient>
<linearGradient id="gr" x1="0" y1="0" x2="1" y2="0"><stop offset="0" stop-color="#8a6414"/><stop offset=".35" stop-color="#f2d040"/><stop offset=".6" stop-color="#fffac8"/><stop offset=".88" stop-color="#d8be48"/><stop offset="1" stop-color="#5a4612"/></linearGradient>
<radialGradient id="orb" cx=".45" cy=".4" r=".6"><stop offset="0" stop-color="#2f7a28"/><stop offset=".6" stop-color="#0f4a12"/><stop offset=".85" stop-color="#1a7a1a"/><stop offset="1" stop-color="#3aa030"/></radialGradient>
<linearGradient id="ring" x1="0" y1="0" x2="1" y2="1"><stop offset="0" stop-color="#a8843c"/><stop offset=".3" stop-color="#f4e8b0"/><stop offset=".6" stop-color="#c09448"/><stop offset="1" stop-color="#7a5a28"/></linearGradient>
<linearGradient id="badge" x1="0" y1="0" x2="0" y2="1"><stop offset="0" stop-color="#f0d890"/><stop offset=".5" stop-color="#c89848"/><stop offset="1" stop-color="#6a4a20"/></linearGradient>
<linearGradient id="ssr" x1="0" y1="0" x2="0" y2="1"><stop offset="0" stop-color="#fff4b0"/><stop offset=".45" stop-color="#f0c050"/><stop offset="1" stop-color="#b07a28"/></linearGradient><linearGradient id="leaf" x1="0" y1="0" x2="0" y2="1"><stop offset="0" stop-color="#fff0b0"/><stop offset="1" stop-color="#b88838"/></linearGradient>
</defs>
<rect width="280" height="160" fill="#3a2e0c"/>
<rect x="1" y="1" width="278" height="9" fill="url(#gv)"/>
<rect x="1" y="149" width="278" height="10" fill="url(#gb)"/>
<rect x="1" y="1" width="8" height="158" fill="url(#gh)"/>
<rect x="272" y="1" width="7" height="158" fill="url(#gr)"/>
<rect x="9" y="10" width="263" height="139" fill="#f6ba7a"/>
<path d="M9 10H10V149H9Z" fill="#7a5418" opacity=".6"/>
<path d="M9 10V11H272V10Z" fill="#7a5418" opacity=".4"/>
<path d="M9 148H272V149H9Z" fill="#6a4410" opacity=".7"/>
<path d="M271 10H272V149H271Z" fill="#7a5418" opacity=".6"/>
<!-- top-left ornament -->
<path d="M1 1H36C31 4 27 8 23 12C19 16 15 20 12 26C10 30 7 35 4 40L1 44Z" fill="#2a1606"/>
<path d="M8 3C14 4 20 8 23 14C16 12 11 8 8 3Z" fill="#b86a28"/>
<path d="M3 6C8 9 10 13 9 18C6 15 4 11 3 6Z" fill="#f4e8c8"/>
<path d="M5 22C9 17 16 17 18 22C14 21 11 23 11 26C11 29 14 30 17 28C15 33 7 34 5 28Z" fill="#fff2d0"/>
<path d="M20 5C28 2 34 4 37 9C32 8 27 9 23 12Z" fill="#f8ecc8"/>
<path d="M34 2C46 1 56 2 68 5C58 5 48 6 40 8Z" fill="#fff6e0"/>
<path d="M55 2L65 9" stroke="#6a3a10" stroke-width="1.3"/>
<path d="M2 32C5 44 6 60 5 84H8C9 60 8 44 6 34Z" fill="#fff6e0"/>
<path d="M4 36C7 42 10 48 9 58" stroke="#5a3010" stroke-width="1.3" fill="none"/>
<!-- top-middle ornament -->
<path d="M100 2C112 3 122 6 130 8L141 13L152 8C160 6 170 3 182 2C172 6 162 9 154 11L141 14L128 11C120 9 110 6 100 2Z" fill="#3a2008"/>
<path d="M120 1H162L141 13Z" fill="#4a2a08"/>
<path d="M141 13L124 2M141 13L130 1.5M141 13L136 1.5M141 13L146 1.5M141 13L152 1.5M141 13L158 2" stroke="#fff0c8" stroke-width="1.1"/>
<path d="M104 3C114 5 122 7 128 10" stroke="#fff4d8" stroke-width="1" fill="none"/>
<path d="M178 3C168 5 160 7 154 10" stroke="#fff4d8" stroke-width="1" fill="none"/>
<!-- top-right corner under badge -->
<path d="M228 1H279V22L274 16L268 8L252 5Z" fill="#4a3010"/><path d="M262 3C268 6 272 10 276 16" stroke="#e8c878" stroke-width="1.2" fill="none"/>
<!-- bottom-middle ornament -->
<path d="M130 158L140 150L150 158Z" fill="#4a2c08"/>
<path d="M134 158L140 153L146 158" stroke="#f8e8b0" stroke-width="1" fill="none"/>
<path d="M80 150C84 146 84 144 82 141C88 144 88 148 86 150Z" fill="#f4e0a0"/>
<path d="M196 150C200 146 200 144 198 141C204 144 204 148 202 150Z" fill="#f4e0a0"/>
<path d="M60 152C70 150 80 154 92 156" stroke="#8a5a18" stroke-width="1.5" fill="none"/>
<path d="M190 156C204 152 214 150 224 152" stroke="#8a5a18" stroke-width="1.5" fill="none"/>
<!-- bottom-right ornament -->
<path d="M279 108V160H198C216 157 230 152 244 143C258 133 268 122 279 108Z" fill="#3a2408"/>
<path d="M277 114C268 126 262 138 262 148C262 154 266 158 272 158H277C270 156 267 150 268 143C269 134 273 124 277 114Z" fill="#ecdcb0"/>
<path d="M272 124C266 134 264 144 266 152" stroke="#5a3a10" stroke-width="1.6" fill="none"/>
<path d="M204 158C222 155 236 150 250 141C244 150 230 156 212 159Z" fill="#f0dc98"/>
<path d="M226 158C238 155 248 150 256 143" stroke="#d8b050" stroke-width="1.8" fill="none"/>
<path d="M246 158C252 154 256 150 260 144" stroke="#b88838" stroke-width="1.4" fill="none"/>
<!-- SSR badge -->
<g>
<path d="M218 26C212 38 214 52 226 62M276 26C282 38 280 52 268 62" stroke="#8a6428" stroke-width="2" fill="none"/>
<ellipse cx="229.1" cy="14.1" rx="2.4" ry="5" transform="rotate(32 229.1 14.1)" fill="url(#leaf)" stroke="#6a4a18" stroke-width=".5"/><ellipse cx="224.1" cy="19.1" rx="2.4" ry="5" transform="rotate(18 224.1 19.1)" fill="url(#leaf)" stroke="#6a4a18" stroke-width=".5"/><ellipse cx="220.5" cy="25.2" rx="2.4" ry="5" transform="rotate(4 220.5 25.2)" fill="url(#leaf)" stroke="#6a4a18" stroke-width=".5"/><ellipse cx="218.4" cy="32.0" rx="2.4" ry="5" transform="rotate(-10 218.4 32.0)" fill="url(#leaf)" stroke="#6a4a18" stroke-width=".5"/><ellipse cx="218.1" cy="39.0" rx="2.4" ry="5" transform="rotate(-24 218.1 39.0)" fill="url(#leaf)" stroke="#6a4a18" stroke-width=".5"/><ellipse cx="219.4" cy="46.0" rx="2.4" ry="5" transform="rotate(-38 219.4 46.0)" fill="url(#leaf)" stroke="#6a4a18" stroke-width=".5"/><ellipse cx="222.4" cy="52.4" rx="2.4" ry="5" transform="rotate(-52 222.4 52.4)" fill="url(#leaf)" stroke="#6a4a18" stroke-width=".5"/><ellipse cx="226.9" cy="57.9" rx="2.4" ry="5" transform="rotate(-66 226.9 57.9)" fill="url(#leaf)" stroke="#6a4a18" stroke-width=".5"/><ellipse cx="232.5" cy="62.1" rx="2.4" ry="5" transform="rotate(-80 232.5 62.1)" fill="url(#leaf)" stroke="#6a4a18" stroke-width=".5"/><ellipse cx="264.9" cy="14.1" rx="2.4" ry="5" transform="rotate(-32 264.9 14.1)" fill="url(#leaf)" stroke="#6a4a18" stroke-width=".5"/><ellipse cx="269.9" cy="19.1" rx="2.4" ry="5" transform="rotate(-18 269.9 19.1)" fill="url(#leaf)" stroke="#6a4a18" stroke-width=".5"/><ellipse cx="273.5" cy="25.2" rx="2.4" ry="5" transform="rotate(-4 273.5 25.2)" fill="url(#leaf)" stroke="#6a4a18" stroke-width=".5"/><ellipse cx="275.6" cy="32.0" rx="2.4" ry="5" transform="rotate(10 275.6 32.0)" fill="url(#leaf)" stroke="#6a4a18" stroke-width=".5"/><ellipse cx="275.9" cy="39.0" rx="2.4" ry="5" transform="rotate(24 275.9 39.0)" fill="url(#leaf)" stroke="#6a4a18" stroke-width=".5"/><ellipse cx="274.6" cy="46.0" rx="2.4" ry="5" transform="rotate(38 274.6 46.0)" fill="url(#leaf)" stroke="#6a4a18" stroke-width=".5"/><ellipse cx="271.6" cy="52.4" rx="2.4" ry="5" transform="rotate(52 271.6 52.4)" fill="url(#leaf)" stroke="#6a4a18" stroke-width=".5"/><ellipse cx="267.1" cy="57.9" rx="2.4" ry="5" transform="rotate(66 267.1 57.9)" fill="url(#leaf)" stroke="#6a4a18" stroke-width=".5"/><ellipse cx="261.5" cy="62.1" rx="2.4" ry="5" transform="rotate(80 261.5 62.1)" fill="url(#leaf)" stroke="#6a4a18" stroke-width=".5"/>
<path d="M224 16H270L274 24V46L247 70L220 46V24Z" fill="#c89848" stroke="#4a2c0c" stroke-width="1.2"/>
<path d="M228 20H266L269 25V45L247 64L225 45V25Z" fill="#4a2810"/>
<path d="M235 19L236 7L241 12L247 4L253 12L258 7L259 19Z" fill="#f2e2a8" stroke="#6a4818" stroke-width=".9"/>
<path d="M237 15H257" stroke="#a88040" stroke-width="1"/>
<text x="247" y="47" text-anchor="middle" font-family="Liberation Serif" font-weight="bold" font-size="35" transform="translate(247 0) scale(.64 1) translate(-247 0)" fill="url(#ssr)" stroke="#2a1405" stroke-width="2" paint-order="stroke">SSR</text>
<path d="M229 55Q247 61 265 55L267 63Q247 68 227 63Z" fill="#e8d090" stroke="#5a3a10" stroke-width=".8"/>
<path d="M235 60Q247 63 259 60" stroke="#7a5a20" stroke-width="1"/>
</g>
<!-- orb -->
<circle cx="33" cy="128" r="30.5" fill="#5a4010"/>
<circle cx="33" cy="128" r="29.5" fill="url(#ring)"/>
<circle cx="33" cy="128" r="25.5" fill="#f4f0d8"/>
<circle cx="33" cy="128" r="24" fill="url(#orb)"/>
<path d="M15 124C15 115 23 110 31 111C39 112 43 117 42 123C41 129 35 134 29 139C27 142 29 145 34 145C30 148 23 147 23 141C23 136 29 131 33 126C36 122 35 118 31 118C26 118 22 121 20 126Z" fill="#7ad84c"/>
<path d="M40 134C45 130 48 125 47 118C52 125 51 134 42 139Z" fill="#6cc840"/>
<path d="M35 143C43 141 49 136 51 128C53 137 46 145 37 147Z" fill="#5cb838"/>
<path d="M16 130C17 136 20 140 25 142C20 143 15 139 14 132Z" fill="#6cc840"/>
<path d="M19 118C23 113 30 112 36 114" stroke="#d8ffb0" stroke-width="1.2" fill="none" opacity=".8"/>
</svg>
<div class="a" style="left:918px;top:82px;width:16px;height:701px;background:linear-gradient(90deg,#2e2e2e,#3a3a3a 25%,#474747 70%,#474747);"></div>
<div class="a" style="left:74px;top:783px;width:860px;height:16px;background:linear-gradient(#3c3c3c,#474747);"></div>
<div class="a" style="left:122px;top:783px;width:226px;height:16px;background:linear-gradient(#454545,#4e4e4e);"></div>
<div class="a" style="left:918px;top:783px;width:16px;height:16px;background:#535353;"></div>
<div class="a" style="left:74px;top:799px;width:860px;height:1px;background:#2c2c2c;"></div>
<div class="t" style="left:86px;top:787px;font-size:10px;color:#eeeeee;">100%</div>
<div class="a" style="left:124px;top:786px;width:19px;height:1px;background:#1e1e1e;"></div>
<div class="a" style="left:124px;top:787px;width:19px;height:10px;background:#a8a8a8;border-radius:0 0 2px 2px"></div>
<svg style="left:124px;top:786px;" width="19" height="11" viewBox="0 0 19 11"><g transform="translate(5 6)"><circle r="3" fill="#1a1a1a"/><g stroke="#1a1a1a" stroke-width="1.6"><path d="M0 -4.3V4.3M-4.3 0H4.3M-3 -3L3 3M3 -3L-3 3"/></g><circle r="1" fill="#b8b8b8"/></g><path d="M9.5 3.5L16.5 8" stroke="#1a1a1a" stroke-width="1.2"/><path d="M8.5 3L11.5 1.5L11 5Z M17.5 8.5L14.5 10L15 6.5Z" fill="#1a1a1a"/></svg>
<svg style="left:149px;top:785px;" width="13" height="12" viewBox="0 0 13 12"><path d="M1 1.5H5" stroke="#1e1e1e"/><path d="M1 3.5V10.5H10V8.5M1 3.5H4" fill="none" stroke="#c8c8c8" stroke-width="1.5"/><rect x="2" y="9.2" width="8" height="1" fill="#1e1e1e"/><path d="M3.5 9C3.5 5.5 6 4.5 9 4.5V2L12.5 5.5L9 9V6.8C6.5 6.8 4.8 7.5 3.5 9Z" fill="#c8c8c8"/></svg>
<div class="t" style="left:209px;top:788px;font-size:10px;color:#e6e6e6;">Doc: 131.3K/2.00M</div>
<svg style="left:338px;top:786px;" width="8" height="10" viewBox="0 0 8 10"><path d="M0.5 0.5L7.5 5L0.5 9.5Z" fill="#f0f0f0"/></svg>
<div class="a" style="left:936px;top:63px;width:38px;height:11px;background:linear-gradient(#3c3c3c 0,#3c3c3c 1px,#333 1px);"></div>
<div class="a" style="left:936px;top:75px;width:38px;height:725px;background:linear-gradient(#5e5e5e 0,#5e5e5e 1px,#535353 1px);"></div>
<div class="a" style="left:976px;top:63px;width:242px;height:11px;background:linear-gradient(#3c3c3c 0,#3c3c3c 1px,#333 1px);"></div>
<div class="a" style="left:976px;top:75px;width:242px;height:725px;background:#535353;"></div>
<svg style="left:4px;top:65px;" width="9" height="7" viewBox="0 0 9 7"><path d="M4 0.5L0.5 3.5L4 6.5ZM8.5 0.5L5 3.5L8.5 6.5Z" fill="#c8c8c8"/></svg>
<div class="a" style="left:26px;top:77px;width:1px;height:5px;background:#2e2e2e;"></div>
<div class="a" style="left:28px;top:77px;width:1px;height:5px;background:#2e2e2e;"></div>
<div class="a" style="left:30px;top:77px;width:1px;height:5px;background:#2e2e2e;"></div>
<div class="a" style="left:32px;top:77px;width:1px;height:5px;background:#2e2e2e;"></div>
<div class="a" style="left:34px;top:77px;width:1px;height:5px;background:#2e2e2e;"></div>
<div class="a" style="left:36px;top:77px;width:1px;height:5px;background:#2e2e2e;"></div>
<div class="a" style="left:38px;top:77px;width:1px;height:5px;background:#2e2e2e;"></div>
<div class="a" style="left:40px;top:77px;width:1px;height:5px;background:#2e2e2e;"></div>
<div class="a" style="left:42px;top:77px;width:1px;height:5px;background:#2e2e2e;"></div>
<div class="a" style="left:44px;top:77px;width:1px;height:5px;background:#2e2e2e;"></div>
<div class="a" style="left:4px;top:91px;width:32px;height:24px;background:#383838;border:1px solid #2f2f2f;border-radius:3px"></div>
<svg style="left:12px;top:96px;" width="14" height="13" viewBox="0 0 14 13"><rect x="1" y="1" width="12" height="11" fill="none" stroke="#f0f0f0" stroke-width="1.5" stroke-dasharray="3.5 2"/></svg>
<svg style="left:29px;top:109px;" width="4" height="4" viewBox="0 0 4 4"><path d="M3.5 0V3.5H0Z" fill="#b0b0b0"/></svg>
<svg style="left:44px;top:96px;" width="18" height="14" viewBox="0 0 18 14"><path d="M0.5 0.5V10L3.5 7.5L6.5 7.5Z" fill="#c8c8c8"/><path d="M2 7H7" stroke="#c8c8c8" stroke-width="2"/><path d="M12.5 5V14M8 9.5H17" stroke="#dcdcdc" stroke-width="1"/><path d="M12.5 4L11 6H14ZM12.5 15L11 13H14ZM7 9.5L9 8V11ZM18 9.5L16 8V11Z" fill="#dcdcdc"/></svg>
<svg style="left:10px;top:120px;" width="17" height="17" viewBox="0 0 17 17"><path d="M1 2.5L7 7L13 2L14 10L6 12L1 2.5Z" fill="none" stroke="#d0d0d0" stroke-width="1.3"/><path d="M5 12L3 15M6 12C8 13 8 14 6 15" stroke="#d0d0d0" stroke-width="1.2" fill="none"/></svg>
<svg style="left:29px;top:135px;" width="4" height="4" viewBox="0 0 4 4"><path d="M3.5 0V3.5H0Z" fill="#b0b0b0"/></svg>
<svg style="left:43px;top:119px;" width="20" height="18" viewBox="0 0 20 18"><path d="M6 1L7 4L10 3L8 6L11 8L7.5 8.5L8 12L5.5 9.5L3 12L3.5 8.5L0 8L3 6L1 3L4 4Z" fill="#d8d8d8"/><path d="M8 8L16 16" stroke="#c8c8c8" stroke-width="2.2"/></svg>
<svg style="left:61px;top:135px;" width="4" height="4" viewBox="0 0 4 4"><path d="M3.5 0V3.5H0Z" fill="#b0b0b0"/></svg>
<svg style="left:11px;top:145px;" width="16" height="17" viewBox="0 0 16 17"><path d="M4 0V13H15M0 4H12V17" fill="none" stroke="#dcdcdc" stroke-width="2"/><path d="M6 11L15 1.5" stroke="#dcdcdc" stroke-width="1"/></svg>
<svg style="left:29px;top:161px;" width="4" height="4" viewBox="0 0 4 4"><path d="M3.5 0V3.5H0Z" fill="#b0b0b0"/></svg>
<svg style="left:44px;top:145px;" width="17" height="17" viewBox="0 0 17 17"><path d="M2 15L1 16M2.5 14.5L10 7L11.5 8.5L4 16Z" fill="none" stroke="#d0d0d0" stroke-width="1.3"/><path d="M9 5L13 1.5C14 0.5 16 2.5 15 3.5L11.5 7.5Z" fill="#d8d8d8"/><path d="M8.5 4.5L12.5 8.5" stroke="#d8d8d8" stroke-width="2"/></svg>
<svg style="left:61px;top:161px;" width="4" height="4" viewBox="0 0 4 4"><path d="M3.5 0V3.5H0Z" fill="#b0b0b0"/></svg>
<div class="a" style="left:5px;top:169px;width:62px;height:1px;background:#3c3c3c;"></div>
<svg style="left:10px;top:175px;" width="18" height="17" viewBox="0 0 18 17"><g transform="rotate(-45 9 8.5)"><rect x="0" y="5" width="18" height="7" rx="3.5" fill="#b8b8b8"/><rect x="6" y="5" width="6" height="7" fill="#888"/><circle cx="7.5" cy="7" r=".7" fill="#ddd"/><circle cx="10.5" cy="7" r=".7" fill="#ddd"/><circle cx="7.5" cy="10" r=".7" fill="#ddd"/><circle cx="10.5" cy="10" r=".7" fill="#ddd"/></g></svg>
<svg style="left:29px;top:189px;" width="4" height="4" viewBox="0 0 4 4"><path d="M3.5 0V3.5H0Z" fill="#b0b0b0"/></svg>
<svg style="left:43px;top:175px;" width="19" height="17" viewBox="0 0 19 17"><path d="M9 10L17 1.5L18 2.5L10.5 11.5Z" fill="#d0d0d0"/><path d="M8 9.5C5 9 3.5 11 3 13C2.5 15 1.5 15.5 0.5 16C4 16.5 8 16 10 12.5Z" fill="#d0d0d0"/></svg>
<svg style="left:61px;top:189px;" width="4" height="4" viewBox="0 0 4 4"><path d="M3.5 0V3.5H0Z" fill="#b0b0b0"/></svg>
<svg style="left:10px;top:201px;" width="17" height="17" viewBox="0 0 17 17"><circle cx="8.5" cy="3.5" r="3" fill="#d0d0d0"/><rect x="6.5" y="5" width="4" height="5" fill="#d0d0d0"/><path d="M2 10H15L16 13H1Z" fill="#d0d0d0"/><rect x="1" y="14" width="15" height="1.5" fill="#d0d0d0"/></svg>
<svg style="left:29px;top:215px;" width="4" height="4" viewBox="0 0 4 4"><path d="M3.5 0V3.5H0Z" fill="#b0b0b0"/></svg>
<svg style="left:43px;top:201px;" width="19" height="16" viewBox="0 0 19 16"><path d="M11 8L17 1L18 2L12.5 9.5Z" fill="#d0d0d0"/><path d="M10 8C7 7.5 5 9.5 4.5 11.5C4 13.5 3 14 2 14.5C5.5 15 9.5 14.5 11.5 11Z" fill="#d0d0d0"/><path d="M12 3C9 1 5 2 4 5" fill="none" stroke="#d0d0d0" stroke-width="1.5"/><path d="M1 4L5 2L6 6Z" fill="#d0d0d0"/></svg>
<svg style="left:61px;top:215px;" width="4" height="4" viewBox="0 0 4 4"><path d="M3.5 0V3.5H0Z" fill="#b0b0b0"/></svg>
<svg style="left:11px;top:228px;" width="18" height="15" viewBox="0 0 18 15"><path d="M1 9L8 1H17L11 9Z" fill="#e0e0e0"/><path d="M1 9H11V14H1Z" fill="#b0b0b0"/><path d="M11 9L17 1V6L11 14Z" fill="#909090"/></svg>
<svg style="left:29px;top:242px;" width="4" height="4" viewBox="0 0 4 4"><path d="M3.5 0V3.5H0Z" fill="#b0b0b0"/></svg>
<svg style="left:44px;top:229px;" width="17" height="14" viewBox="0 0 17 14"><defs><linearGradient id="tg" x1="0" x2="1"><stop offset="0" stop-color="#333"/><stop offset="1" stop-color="#eee"/></linearGradient></defs><rect x="0.75" y="0.75" width="15.5" height="12.5" fill="url(#tg)" stroke="#e8e8e8" stroke-width="1.5"/></svg>
<svg style="left:61px;top:242px;" width="4" height="4" viewBox="0 0 4 4"><path d="M3.5 0V3.5H0Z" fill="#b0b0b0"/></svg>
<svg style="left:11px;top:253px;" width="16" height="18" viewBox="0 0 16 18"><path d="M2 8C1 4 4 1 8 1H15V8C15 12 11 14 7 13Z" fill="#c0c0c0"/><path d="M7 11L1 17" stroke="#c0c0c0" stroke-width="2"/></svg>
<svg style="left:29px;top:268px;" width="4" height="4" viewBox="0 0 4 4"><path d="M3.5 0V3.5H0Z" fill="#b0b0b0"/></svg>
<svg style="left:44px;top:254px;" width="17" height="17" viewBox="0 0 17 17"><circle cx="6.5" cy="6.5" r="5.5" fill="#c8c8c8"/><path d="M10 10L16 16" stroke="#c8c8c8" stroke-width="2.2"/></svg>
<svg style="left:61px;top:268px;" width="4" height="4" viewBox="0 0 4 4"><path d="M3.5 0V3.5H0Z" fill="#b0b0b0"/></svg>
<div class="a" style="left:5px;top:276px;width:62px;height:1px;background:#3c3c3c;"></div>
<svg style="left:10px;top:282px;" width="19" height="17" viewBox="0 0 19 17"><path d="M1 16L4 7L11 4L13 6L10 13Z" fill="#d0d0d0"/><path d="M1 16L7 10" stroke="#555" stroke-width="1"/><circle cx="7.5" cy="9.5" r="1.2" fill="#555"/><path d="M11 4L14 1L18 5L15 8Z" fill="#d8d8d8"/></svg>
<svg style="left:29px;top:296px;" width="4" height="4" viewBox="0 0 4 4"><path d="M3.5 0V3.5H0Z" fill="#b0b0b0"/></svg>
<div class="t" style="left:46px;top:281px;font-size:20px;color:#d0d0d0;font-family:'Liberation Serif',serif">T</div>
<svg style="left:61px;top:296px;" width="4" height="4" viewBox="0 0 4 4"><path d="M3.5 0V3.5H0Z" fill="#b0b0b0"/></svg>
<svg style="left:14px;top:308px;" width="12" height="17" viewBox="0 0 12 17"><path d="M1 1V13L4 10L7 16L9 15L6 9H10Z" fill="#c8c8c8"/></svg>
<svg style="left:29px;top:322px;" width="4" height="4" viewBox="0 0 4 4"><path d="M3.5 0V3.5H0Z" fill="#b0b0b0"/></svg>
<svg style="left:44px;top:310px;" width="17" height="14" viewBox="0 0 17 14"><rect x="1" y="1" width="15" height="12" rx="3.5" fill="#8a8a8a" stroke="#d8d8d8" stroke-width="1.5"/></svg>
<svg style="left:61px;top:322px;" width="4" height="4" viewBox="0 0 4 4"><path d="M3.5 0V3.5H0Z" fill="#b0b0b0"/></svg>
<div class="a" style="left:5px;top:330px;width:62px;height:1px;background:#3c3c3c;"></div>
<svg style="left:10px;top:337px;" width="18" height="18" viewBox="0 0 18 18"><g stroke="#d0d0d0" stroke-linecap="round" fill="none"><path d="M1.5 8.5L6 13" stroke-width="2.6"/><path d="M5.2 2.8L6.2 9" stroke-width="2.6"/><path d="M9.3 1.6V8.5" stroke-width="2.6"/><path d="M13 2.6L12.5 9" stroke-width="2.6"/><path d="M16 5L14.6 10" stroke-width="2.3"/></g><path d="M5 8H15.5L14.5 16.5H6.5L4.5 12Z" fill="#c8c8c8"/></svg>
<svg style="left:29px;top:351px;" width="4" height="4" viewBox="0 0 4 4"><path d="M3.5 0V3.5H0Z" fill="#b0b0b0"/></svg>
<svg style="left:44px;top:337px;" width="18" height="18" viewBox="0 0 18 18"><circle cx="7" cy="7" r="5.5" fill="#8a8a8a" stroke="#d0d0d0" stroke-width="2"/><path d="M11 11L16.5 16.5" stroke="#d0d0d0" stroke-width="2.5"/></svg>
<div class="a" style="left:28px;top:379px;width:26px;height:26px;background:#ffffff;border:1px solid #1e1e1e;outline:0"></div>
<div class="a" style="left:13px;top:363px;width:26px;height:26px;background:#f6ba7a;border:1px solid #1e1e1e;box-shadow:inset 0 0 0 1px #f4f4f4"></div>
<svg style="left:44px;top:361px;" width="13" height="13" viewBox="0 0 13 13"><path d="M3 3.5C6.5 3.5 10 4.5 10 8.5" stroke="#d8d8d8" stroke-width="1.6" fill="none"/><path d="M0.3 3.5L3.8 0.6V6.4Z" fill="#d8d8d8"/><path d="M10 11.8L7 8.3H13Z" fill="#d8d8d8"/></svg>
<svg style="left:12px;top:396px;" width="11" height="10" viewBox="0 0 11 10"><rect x="3.5" y="3.5" width="7" height="6" fill="#c8c8c8"/><rect x="0.5" y="0.5" width="6" height="6" fill="#222" stroke="#c8c8c8"/></svg>
<svg style="left:9px;top:418px;" width="19" height="15" viewBox="0 0 19 15"><rect x="0.5" y="0.5" width="18" height="13.5" fill="#2a2a2a" stroke="#d8d8d8"/><circle cx="9.5" cy="7.2" r="4.3" fill="none" stroke="#f0f0f0" stroke-width="1.3" stroke-linecap="round" stroke-dasharray="0.1 2.6"/></svg>
<svg style="left:42px;top:418px;" width="19" height="15" viewBox="0 0 19 15"><rect x="0.5" y="4.5" width="12" height="10" fill="#8a8a8a" stroke="#d0d0d0"/><rect x="5.5" y="0.5" width="13" height="10" fill="#a0a0a0" stroke="#d0d0d0"/></svg>
<svg style="left:61px;top:433px;" width="4" height="4" viewBox="0 0 4 4"><path d="M3.5 0V3.5H0Z" fill="#b0b0b0"/></svg>
<svg style="left:962px;top:66px;" width="9" height="7" viewBox="0 0 9 7"><path d="M4 0.5L0.5 3.5L4 6.5ZM8.5 0.5L5 3.5L8.5 6.5Z" fill="#c8c8c8"/></svg>
<div class="a" style="left:946px;top:77px;width:1px;height:4px;background:#2e2e2e;"></div>
<div class="a" style="left:948px;top:77px;width:1px;height:4px;background:#2e2e2e;"></div>
<div class="a" style="left:950px;top:77px;width:1px;height:4px;background:#2e2e2e;"></div>
<div class="a" style="left:952px;top:77px;width:1px;height:4px;background:#2e2e2e;"></div>
<div class="a" style="left:954px;top:77px;width:1px;height:4px;background:#2e2e2e;"></div>
<div class="a" style="left:956px;top:77px;width:1px;height:4px;background:#2e2e2e;"></div>
<div class="a" style="left:958px;top:77px;width:1px;height:4px;background:#2e2e2e;"></div>
<div class="a" style="left:960px;top:77px;width:1px;height:4px;background:#2e2e2e;"></div>
<div class="a" style="left:962px;top:77px;width:1px;height:4px;background:#2e2e2e;"></div>
<div class="a" style="left:964px;top:77px;width:1px;height:4px;background:#2e2e2e;"></div>
<svg style="left:949px;top:88px;" width="17" height="19" viewBox="0 0 17 19"><rect x="1" y="0" width="6" height="1" fill="#222"/><rect x="1.5" y="1.5" width="5" height="5" fill="#4a4a4a" stroke="#d8d8d8"/><rect x="1" y="6" width="6" height="1" fill="#222"/><rect x="1.5" y="7.5" width="5" height="5" fill="#4a4a4a" stroke="#d8d8d8"/><rect x="1" y="12" width="6" height="1" fill="#222"/><rect x="1" y="13" width="6" height="6" fill="#c8c8c8"/><rect x="9" y="1" width="6" height="1" fill="#222"/><path d="M9 2H14C17 5 17 12 10 17L9.5 16C13 12 13.5 8 11.5 5L9 6Z" fill="#d0d0d0"/></svg>
<svg style="left:949px;top:120px;" width="16" height="14" viewBox="0 0 16 14"><path d="M0 0L15.5 6.8L0 13.5Z" fill="#c8c8c8"/></svg>
<div class="a" style="left:937px;top:143px;width:37px;height:1px;background:#3a3a3a;"></div>
<div class="a" style="left:937px;top:144px;width:37px;height:1px;background:#5e5e5e;"></div>
<div class="a" style="left:946px;top:147px;width:1px;height:4px;background:#2e2e2e;"></div>
<div class="a" style="left:948px;top:147px;width:1px;height:4px;background:#2e2e2e;"></div>
<div class="a" style="left:950px;top:147px;width:1px;height:4px;background:#2e2e2e;"></div>
<div class="a" style="left:952px;top:147px;width:1px;height:4px;background:#2e2e2e;"></div>
<div class="a" style="left:954px;top:147px;width:1px;height:4px;background:#2e2e2e;"></div>
<div class="a" style="left:956px;top:147px;width:1px;height:4px;background:#2e2e2e;"></div>
<div class="a" style="left:958px;top:147px;width:1px;height:4px;background:#2e2e2e;"></div>
<div class="a" style="left:960px;top:147px;width:1px;height:4px;background:#2e2e2e;"></div>
<div class="a" style="left:962px;top:147px;width:1px;height:4px;background:#2e2e2e;"></div>
<div class="a" style="left:964px;top:147px;width:1px;height:4px;background:#2e2e2e;"></div>
<svg style="left:948px;top:158px;" width="18" height="18" viewBox="0 0 18 18"><path d="M1 3L5 1L9 3V8L5 10L1 8Z" fill="#c8c8c8" stroke="#e0e0e0" stroke-width=".6"/><path d="M1 3L5 5L9 3M5 5V10" stroke="#777" stroke-width=".8" fill="none"/><rect x="11" y="1" width="5" height="4" fill="#d0d0d0"/><rect x="11" y="6" width="5" height="4" fill="#d0d0d0"/><rect x="0" y="12" width="17" height="4" fill="#d0d0d0"/><path d="M12 13H15L13.5 15Z" fill="#333"/></svg>
<svg style="left:948px;top:186px;" width="18" height="18" viewBox="0 0 18 18"><circle cx="8.5" cy="8.8" r="8.3" fill="#c8c8c8"/><circle cx="8.5" cy="4.5" r="1.6" fill="#3a3a3a"/><path d="M6.5 7.5H10V13H11V14.5H6V13H7.2V9H6.5Z" fill="#3a3a3a"/></svg>
<div class="a" style="left:937px;top:212px;width:37px;height:1px;background:#3a3a3a;"></div>
<div class="a" style="left:937px;top:213px;width:37px;height:1px;background:#5e5e5e;"></div>
<div class="a" style="left:946px;top:217px;width:1px;height:4px;background:#2e2e2e;"></div>
<div class="a" style="left:948px;top:217px;width:1px;height:4px;background:#2e2e2e;"></div>
<div class="a" style="left:950px;top:217px;width:1px;height:4px;background:#2e2e2e;"></div>
<div class="a" style="left:952px;top:217px;width:1px;height:4px;background:#2e2e2e;"></div>
<div class="a" style="left:954px;top:217px;width:1px;height:4px;background:#2e2e2e;"></div>
<div class="a" style="left:956px;top:217px;width:1px;height:4px;background:#2e2e2e;"></div>
<div class="a" style="left:958px;top:217px;width:1px;height:4px;background:#2e2e2e;"></div>
<div class="a" style="left:960px;top:217px;width:1px;height:4px;background:#2e2e2e;"></div>
<div class="a" style="left:962px;top:217px;width:1px;height:4px;background:#2e2e2e;"></div>
<div class="a" style="left:964px;top:217px;width:1px;height:4px;background:#2e2e2e;"></div>
<svg style="left:947px;top:226px;" width="18" height="21" viewBox="0 0 18 21"><rect x="3" y="11" width="11" height="10" fill="#c8c8c8"/><path d="M5 11L4 4M8.5 11V2M12 11L14 5" stroke="#d8d8d8" stroke-width="1.5"/><ellipse cx="4" cy="4" rx="2" ry="3" fill="#d8d8d8"/><ellipse cx="8.5" cy="2.5" rx="1.8" ry="2.5" fill="#d8d8d8"/><path d="M13 3L16 4L14.5 7Z" fill="#d8d8d8"/></svg>
<svg style="left:947px;top:256px;" width="19" height="18" viewBox="0 0 19 18"><path d="M0 2H9M0 8H9M0 14H13" stroke="#d0d0d0" stroke-width="2"/><path d="M10 2C13 0 17 0 18 2C17 4 13 4 10 2Z" fill="#d8d8d8"/><path d="M12 8H14L18 16C16 18 13 18 12 16Z" fill="#d8d8d8"/></svg>
<div class="a" style="left:937px;top:282px;width:37px;height:1px;background:#3a3a3a;"></div>
<div class="a" style="left:937px;top:283px;width:37px;height:1px;background:#5e5e5e;"></div>
<div class="a" style="left:946px;top:285px;width:1px;height:4px;background:#2e2e2e;"></div>
<div class="a" style="left:948px;top:285px;width:1px;height:4px;background:#2e2e2e;"></div>
<div class="a" style="left:950px;top:285px;width:1px;height:4px;background:#2e2e2e;"></div>
<div class="a" style="left:952px;top:285px;width:1px;height:4px;background:#2e2e2e;"></div>
<div class="a" style="left:954px;top:285px;width:1px;height:4px;background:#2e2e2e;"></div>
<div class="a" style="left:956px;top:285px;width:1px;height:4px;background:#2e2e2e;"></div>
<div class="a" style="left:958px;top:285px;width:1px;height:4px;background:#2e2e2e;"></div>
<div class="a" style="left:960px;top:285px;width:1px;height:4px;background:#2e2e2e;"></div>
<div class="a" style="left:962px;top:285px;width:1px;height:4px;background:#2e2e2e;"></div>
<div class="a" style="left:964px;top:285px;width:1px;height:4px;background:#2e2e2e;"></div>
<svg style="left:948px;top:296px;" width="17" height="19" viewBox="0 0 17 19"><rect x="0.5" y="9.5" width="5" height="5" fill="none" stroke="#d0d0d0"/><rect x="3.5" y="12.5" width="5" height="5" fill="#535353" stroke="#d0d0d0"/><path d="M11 14V1M14 14V1M9 1H15" stroke="#d8d8d8" stroke-width="1.5"/><circle cx="10" cy="4.5" r="3.2" fill="#d8d8d8"/></svg>
<svg style="left:948px;top:324px;" width="18" height="19" viewBox="0 0 18 19"><rect x="0.5" y="10.5" width="5" height="5" fill="none" stroke="#d0d0d0"/><rect x="3.5" y="13.5" width="5" height="5" fill="#535353" stroke="#d0d0d0"/></svg>
<div class="t" style="left:955px;top:323px;font-size:16px;color:#d8d8d8;"><b>A</b></div>
<div class="a" style="left:937px;top:350px;width:37px;height:1px;background:#3a3a3a;"></div>
<div class="a" style="left:937px;top:351px;width:37px;height:1px;background:#5e5e5e;"></div>
<div class="a" style="left:946px;top:354px;width:1px;height:4px;background:#2e2e2e;"></div>
<div class="a" style="left:948px;top:354px;width:1px;height:4px;background:#2e2e2e;"></div>
<div class="a" style="left:950px;top:354px;width:1px;height:4px;background:#2e2e2e;"></div>
<div class="a" style="left:952px;top:354px;width:1px;height:4px;background:#2e2e2e;"></div>
<div class="a" style="left:954px;top:354px;width:1px;height:4px;background:#2e2e2e;"></div>
<div class="a" style="left:956px;top:354px;width:1px;height:4px;background:#2e2e2e;"></div>
<div class="a" style="left:958px;top:354px;width:1px;height:4px;background:#2e2e2e;"></div>
<div class="a" style="left:960px;top:354px;width:1px;height:4px;background:#2e2e2e;"></div>
<div class="a" style="left:962px;top:354px;width:1px;height:4px;background:#2e2e2e;"></div>
<div class="a" style="left:964px;top:354px;width:1px;height:4px;background:#2e2e2e;"></div>
<div class="t" style="left:948px;top:367px;font-size:17px;color:#d8d8d8;">A</div>
<div class="a" style="left:962px;top:366px;width:1px;height:17px;background:#d8d8d8;"></div>
<svg style="left:950px;top:395px;" width="14" height="16" viewBox="0 0 14 16"><path d="M6 15V1M10 15V1M4 1H11" stroke="#d8d8d8" stroke-width="1.8"/><circle cx="4.5" cy="4.8" r="4" fill="#d8d8d8"/></svg>
<div class="a" style="left:937px;top:419px;width:37px;height:1px;background:#3a3a3a;"></div>
<div class="a" style="left:937px;top:420px;width:37px;height:1px;background:#5e5e5e;"></div>
<svg style="left:1206px;top:66px;" width="9" height="7" viewBox="0 0 9 7"><path d="M0.5 0.5L4 3.5L0.5 6.5ZM5 0.5L8.5 3.5L5 6.5Z" fill="#c8c8c8"/></svg>
<div class="a" style="left:976px;top:75px;width:242px;height:725px;background:#282828;"></div>
<div class="a" style="left:977px;top:75px;width:241px;height:16px;background:#3a3a3a;"></div>
<div class="a" style="left:977px;top:75px;width:41px;height:16px;background:#3c3c3c;border-right:1px solid #2e2e2e"></div>
<div class="a" style="left:1018px;top:75px;width:58px;height:17px;background:linear-gradient(#606060 0,#606060 1px,#535353 1px);"></div>
<div class="t" style="left:984px;top:79px;font-size:9.5px;color:#a8a8a8;font-weight:bold">Color</div>
<div class="t" style="left:1025px;top:79px;font-size:9.5px;color:#f0f0f0;font-weight:bold">Swatches</div>
<svg style="left:1199px;top:79px;" width="15" height="10" viewBox="0 0 15 10"><path d="M0 2.5H6L3 6Z" fill="#d0d0d0"/><path d="M0.5 1.5H5.5" stroke="#222" stroke-width="1"/><path d="M6 0.5H14.5" stroke="#222" stroke-width="1"/><path d="M6 1.5H14.5M6 3.5H14.5M6 5.5H14.5M6 7.5H14.5" stroke="#e0e0e0" stroke-width="1"/></svg>
<div class="a" style="left:977px;top:91px;width:241px;height:137px;background:linear-gradient(#5c5c5c 0,#5c5c5c 1px,#535353 1px);"></div>
<div class="a" style="left:1018px;top:91px;width:58px;height:2px;background:#535353;"></div>
<div class="a" style="left:983px;top:96px;width:194px;height:15px;background:#4a4a4a;"></div>
<div class="a" style="left:985px;top:98px;width:11px;height:11px;background:#f6ba7a;"></div>
<div class="a" style="left:997px;top:98px;width:11px;height:11px;background:#fefde8;"></div>
<div class="a" style="left:1009px;top:98px;width:11px;height:11px;background:#fef5b8;"></div>
<div class="a" style="left:1021px;top:98px;width:11px;height:11px;background:#f43838;"></div>
<div class="a" style="left:1033px;top:98px;width:11px;height:11px;background:#676767;"></div>
<div class="a" style="left:1045px;top:98px;width:11px;height:11px;background:#2a3a48;"></div>
<div class="a" style="left:1057px;top:98px;width:11px;height:11px;background:#273645;"></div>
<div class="a" style="left:1069px;top:98px;width:11px;height:11px;background:#3b4a56;"></div>
<div class="a" style="left:1081px;top:98px;width:11px;height:11px;background:#3e4f5a;"></div>
<div class="a" style="left:1093px;top:98px;width:11px;height:11px;background:#273849;"></div>
<div class="a" style="left:1105px;top:98px;width:11px;height:11px;background:#2a3b50;"></div>
<div class="a" style="left:1117px;top:98px;width:11px;height:11px;background:#6e8ea4;"></div>
<div class="a" style="left:1129px;top:98px;width:11px;height:11px;background:#1a2028;"></div>
<div class="a" style="left:1141px;top:98px;width:11px;height:11px;background:#182224;"></div>
<div class="a" style="left:1153px;top:98px;width:11px;height:11px;background:#3a2f58;"></div>
<div class="a" style="left:1165px;top:98px;width:11px;height:11px;background:#6f91ab;"></div>
<div class="a" style="left:977px;top:114px;width:224px;height:95px;background:#4a4a4a;"></div>
<div class="a" style="left:977px;top:114px;width:11px;height:11px;background:#ff0000;"></div>
<div class="a" style="left:989px;top:114px;width:11px;height:11px;background:#ffff00;"></div>
<div class="a" style="left:1001px;top:114px;width:11px;height:11px;background:#00ff00;"></div>
<div class="a" style="left:1013px;top:114px;width:11px;height:11px;background:#00ffff;"></div>
<div class="a" style="left:1025px;top:114px;width:11px;height:11px;background:#0000ff;"></div>
<div class="a" style="left:1037px;top:114px;width:11px;height:11px;background:#ff00ff;"></div>
<div class="a" style="left:1049px;top:114px;width:11px;height:11px;background:#ffffff;"></div>
<div class="a" style="left:1061px;top:114px;width:11px;height:11px;background:#ebebeb;"></div>
<div class="a" style="left:1073px;top:114px;width:11px;height:11px;background:#e1e1e1;"></div>
<div class="a" style="left:1085px;top:114px;width:11px;height:11px;background:#d7d7d7;"></div>
<div class="a" style="left:1097px;top:114px;width:11px;height:11px;background:#cccccc;"></div>
<div class="a" style="left:1109px;top:114px;width:11px;height:11px;background:#c2c2c2;"></div>
<div class="a" style="left:1121px;top:114px;width:11px;height:11px;background:#b7b7b7;"></div>
<div class="a" style="left:1133px;top:114px;width:11px;height:11px;background:#acacac;"></div>
<div class="a" style="left:1145px;top:114px;width:11px;height:11px;background:#a0a0a0;"></div>
<div class="a" style="left:1157px;top:114px;width:11px;height:11px;background:#959595;"></div>
<div class="a" style="left:1169px;top:114px;width:11px;height:11px;background:#ee1d24;"></div>
<div class="a" style="left:1181px;top:114px;width:11px;height:11px;background:#fff100;"></div>
<div class="a" style="left:977px;top:126px;width:11px;height:11px;background:#00a650;"></div>
<div class="a" style="left:989px;top:126px;width:11px;height:11px;background:#00aeef;"></div>
<div class="a" style="left:1001px;top:126px;width:11px;height:11px;background:#2e3192;"></div>
<div class="a" style="left:1013px;top:126px;width:11px;height:11px;background:#ec008c;"></div>
<div class="a" style="left:1025px;top:126px;width:11px;height:11px;background:#898989;"></div>
<div class="a" style="left:1037px;top:126px;width:11px;height:11px;background:#7d7d7d;"></div>
<div class="a" style="left:1049px;top:126px;width:11px;height:11px;background:#707070;"></div>
<div class="a" style="left:1061px;top:126px;width:11px;height:11px;background:#626262;"></div>
<div class="a" style="left:1073px;top:126px;width:11px;height:11px;background:#555555;"></div>
<div class="a" style="left:1085px;top:126px;width:11px;height:11px;background:#464646;"></div>
<div class="a" style="left:1097px;top:126px;width:11px;height:11px;background:#363636;"></div>
<div class="a" style="left:1109px;top:126px;width:11px;height:11px;background:#262626;"></div>
<div class="a" style="left:1121px;top:126px;width:11px;height:11px;background:#111111;"></div>
<div class="a" style="left:1133px;top:126px;width:11px;height:11px;background:#000000;"></div>
<div class="a" style="left:1145px;top:126px;width:11px;height:11px;background:#f7977a;"></div>
<div class="a" style="left:1157px;top:126px;width:11px;height:11px;background:#fbad82;"></div>
<div class="a" style="left:1169px;top:126px;width:11px;height:11px;background:#fdc68c;"></div>
<div class="a" style="left:1181px;top:126px;width:11px;height:11px;background:#fff799;"></div>
<div class="a" style="left:977px;top:138px;width:11px;height:11px;background:#c6df9c;"></div>
<div class="a" style="left:989px;top:138px;width:11px;height:11px;background:#a4d49d;"></div>
<div class="a" style="left:1001px;top:138px;width:11px;height:11px;background:#81ca9d;"></div>
<div class="a" style="left:1013px;top:138px;width:11px;height:11px;background:#7bcdc9;"></div>
<div class="a" style="left:1025px;top:138px;width:11px;height:11px;background:#6ccff7;"></div>
<div class="a" style="left:1037px;top:138px;width:11px;height:11px;background:#7ca6d8;"></div>
<div class="a" style="left:1049px;top:138px;width:11px;height:11px;background:#8293ca;"></div>
<div class="a" style="left:1061px;top:138px;width:11px;height:11px;background:#8881be;"></div>
<div class="a" style="left:1073px;top:138px;width:11px;height:11px;background:#a286bd;"></div>
<div class="a" style="left:1085px;top:138px;width:11px;height:11px;background:#bc8cbf;"></div>
<div class="a" style="left:1097px;top:138px;width:11px;height:11px;background:#f49bc1;"></div>
<div class="a" style="left:1109px;top:138px;width:11px;height:11px;background:#f5999d;"></div>
<div class="a" style="left:1121px;top:138px;width:11px;height:11px;background:#f16c4d;"></div>
<div class="a" style="left:1133px;top:138px;width:11px;height:11px;background:#f68e54;"></div>
<div class="a" style="left:1145px;top:138px;width:11px;height:11px;background:#fbaf5a;"></div>
<div class="a" style="left:1157px;top:138px;width:11px;height:11px;background:#fff467;"></div>
<div class="a" style="left:1169px;top:138px;width:11px;height:11px;background:#acd372;"></div>
<div class="a" style="left:1181px;top:138px;width:11px;height:11px;background:#7dc473;"></div>
<div class="a" style="left:977px;top:150px;width:11px;height:11px;background:#39b778;"></div>
<div class="a" style="left:989px;top:150px;width:11px;height:11px;background:#17bcb4;"></div>
<div class="a" style="left:1001px;top:150px;width:11px;height:11px;background:#00bff3;"></div>
<div class="a" style="left:1013px;top:150px;width:11px;height:11px;background:#438ccb;"></div>
<div class="a" style="left:1025px;top:150px;width:11px;height:11px;background:#5573b7;"></div>
<div class="a" style="left:1037px;top:150px;width:11px;height:11px;background:#5e5ca7;"></div>
<div class="a" style="left:1049px;top:150px;width:11px;height:11px;background:#855fa8;"></div>
<div class="a" style="left:1061px;top:150px;width:11px;height:11px;background:#a763a9;"></div>
<div class="a" style="left:1073px;top:150px;width:11px;height:11px;background:#ef6ea8;"></div>
<div class="a" style="left:1085px;top:150px;width:11px;height:11px;background:#f16d7e;"></div>
<div class="a" style="left:1097px;top:150px;width:11px;height:11px;background:#ee1d24;"></div>
<div class="a" style="left:1109px;top:150px;width:11px;height:11px;background:#f16522;"></div>
<div class="a" style="left:1121px;top:150px;width:11px;height:11px;background:#f7941d;"></div>
<div class="a" style="left:1133px;top:150px;width:11px;height:11px;background:#fff100;"></div>
<div class="a" style="left:1145px;top:150px;width:11px;height:11px;background:#8fc63d;"></div>
<div class="a" style="left:1157px;top:150px;width:11px;height:11px;background:#37b44a;"></div>
<div class="a" style="left:1169px;top:150px;width:11px;height:11px;background:#00a650;"></div>
<div class="a" style="left:1181px;top:150px;width:11px;height:11px;background:#00a99e;"></div>
<div class="a" style="left:977px;top:162px;width:11px;height:11px;background:#00aeef;"></div>
<div class="a" style="left:989px;top:162px;width:11px;height:11px;background:#0072bc;"></div>
<div class="a" style="left:1001px;top:162px;width:11px;height:11px;background:#0054a5;"></div>
<div class="a" style="left:1013px;top:162px;width:11px;height:11px;background:#2e3192;"></div>
<div class="a" style="left:1025px;top:162px;width:11px;height:11px;background:#662d91;"></div>
<div class="a" style="left:1037px;top:162px;width:11px;height:11px;background:#92278f;"></div>
<div class="a" style="left:1049px;top:162px;width:11px;height:11px;background:#ec008c;"></div>
<div class="a" style="left:1061px;top:162px;width:11px;height:11px;background:#ed145a;"></div>
<div class="a" style="left:1073px;top:162px;width:11px;height:11px;background:#9e0b0f;"></div>
<div class="a" style="left:1085px;top:162px;width:11px;height:11px;background:#a0410d;"></div>
<div class="a" style="left:1097px;top:162px;width:11px;height:11px;background:#a3620a;"></div>
<div class="a" style="left:1109px;top:162px;width:11px;height:11px;background:#aba000;"></div>
<div class="a" style="left:1121px;top:162px;width:11px;height:11px;background:#598527;"></div>
<div class="a" style="left:1133px;top:162px;width:11px;height:11px;background:#1a7b30;"></div>
<div class="a" style="left:1145px;top:162px;width:11px;height:11px;background:#007236;"></div>
<div class="a" style="left:1157px;top:162px;width:11px;height:11px;background:#00746b;"></div>
<div class="a" style="left:1169px;top:162px;width:11px;height:11px;background:#0076a3;"></div>
<div class="a" style="left:1181px;top:162px;width:11px;height:11px;background:#004b80;"></div>
<div class="a" style="left:977px;top:174px;width:11px;height:11px;background:#003471;"></div>
<div class="a" style="left:989px;top:174px;width:11px;height:11px;background:#1b1464;"></div>
<div class="a" style="left:1001px;top:174px;width:11px;height:11px;background:#440e62;"></div>
<div class="a" style="left:1013px;top:174px;width:11px;height:11px;background:#630460;"></div>
<div class="a" style="left:1025px;top:174px;width:11px;height:11px;background:#9e005d;"></div>
<div class="a" style="left:1037px;top:174px;width:11px;height:11px;background:#9e0039;"></div>
<div class="a" style="left:1049px;top:174px;width:11px;height:11px;background:#790000;"></div>
<div class="a" style="left:1061px;top:174px;width:11px;height:11px;background:#7b2e00;"></div>
<div class="a" style="left:1073px;top:174px;width:11px;height:11px;background:#7d4900;"></div>
<div class="a" style="left:1085px;top:174px;width:11px;height:11px;background:#827a00;"></div>
<div class="a" style="left:1097px;top:174px;width:11px;height:11px;background:#3e6617;"></div>
<div class="a" style="left:1109px;top:174px;width:11px;height:11px;background:#045f20;"></div>
<div class="a" style="left:1121px;top:174px;width:11px;height:11px;background:#005824;"></div>
<div class="a" style="left:1133px;top:174px;width:11px;height:11px;background:#005951;"></div>
<div class="a" style="left:1145px;top:174px;width:11px;height:11px;background:#005b7e;"></div>
<div class="a" style="left:1157px;top:174px;width:11px;height:11px;background:#003562;"></div>
<div class="a" style="left:1169px;top:174px;width:11px;height:11px;background:#002056;"></div>
<div class="a" style="left:1181px;top:174px;width:11px;height:11px;background:#0c004b;"></div>
<div class="a" style="left:977px;top:186px;width:11px;height:11px;background:#30004a;"></div>
<div class="a" style="left:989px;top:186px;width:11px;height:11px;background:#4b0048;"></div>
<div class="a" style="left:1001px;top:186px;width:11px;height:11px;background:#7a0045;"></div>
<div class="a" style="left:1013px;top:186px;width:11px;height:11px;background:#7a0026;"></div>
<div class="a" style="left:1025px;top:186px;width:11px;height:11px;background:#c7b299;"></div>
<div class="a" style="left:1037px;top:186px;width:11px;height:11px;background:#998675;"></div>
<div class="a" style="left:1049px;top:186px;width:11px;height:11px;background:#736357;"></div>
<div class="a" style="left:1061px;top:186px;width:11px;height:11px;background:#534741;"></div>
<div class="a" style="left:1073px;top:186px;width:11px;height:11px;background:#37302a;"></div>
<div class="a" style="left:1085px;top:186px;width:11px;height:11px;background:#c69c6e;"></div>
<div class="a" style="left:1097px;top:186px;width:11px;height:11px;background:#a67c52;"></div>
<div class="a" style="left:1109px;top:186px;width:11px;height:11px;background:#8c6239;"></div>
<div class="a" style="left:1121px;top:186px;width:11px;height:11px;background:#754c24;"></div>
<div class="a" style="left:1133px;top:186px;width:11px;height:11px;background:#603913;"></div>
<div class="a" style="left:1201px;top:114px;width:16px;height:95px;background:#444444;"></div>
<svg style="left:1205px;top:120px;" width="7" height="5" viewBox="0 0 7 5"><path d="M0 4.5L3.5 0.5L7 4.5Z" fill="#e0e0e0"/></svg>
<div class="a" style="left:1203px;top:133px;width:13px;height:57px;background:linear-gradient(90deg,#6a6a6a,#8a8a8a,#6a6a6a);border-radius:6px"></div>
<svg style="left:1205px;top:201px;" width="7" height="5" viewBox="0 0 7 5"><path d="M0 0.5L3.5 4.5L7 0.5Z" fill="#e0e0e0"/></svg>
<div class="a" style="left:977px;top:209px;width:241px;height:1px;background:#3a3a3a;"></div>
<div class="a" style="left:977px;top:210px;width:241px;height:1px;background:#5e5e5e;"></div>
<svg style="left:1149px;top:213px;" width="11" height="12" viewBox="0 0 11 12"><defs><linearGradient id="nw" x1="0" y1="0" x2="0" y2="1"><stop offset="0" stop-color="#f4f4f4"/><stop offset="1" stop-color="#c8c8c8"/></linearGradient></defs><rect x="0" y="0" width="11" height="1" fill="#1a1a1a"/><path d="M0 1H10.5V11.5H4.5V7H0Z" fill="url(#nw)"/><path d="M0 7H4.5V11.5Z" fill="#d8d8d8"/><path d="M4.5 7V11.5" stroke="#1a1a1a"/></svg>
<svg style="left:1177px;top:213px;" width="12" height="13" viewBox="0 0 12 13"><path d="M0.5 2.5H11.5M4 2V0.5H8V2" stroke="#9a9a9a" stroke-width="1.3" fill="none"/><path d="M1.8 4.5H10.2L9.6 12.3H2.4Z" fill="none" stroke="#9a9a9a" stroke-width="1.2"/><path d="M4.5 5V11.5M7.5 5V11.5" stroke="#9a9a9a" stroke-width="1"/></svg>
<div class="a" style="left:1214px;top:225px;width:1px;height:1px;background:#1e1e1e;"></div>
<div class="a" style="left:1212px;top:225px;width:1px;height:1px;background:#1e1e1e;"></div>
<div class="a" style="left:1210px;top:225px;width:1px;height:1px;background:#1e1e1e;"></div>
<div class="a" style="left:1208px;top:225px;width:1px;height:1px;background:#1e1e1e;"></div>
<div class="a" style="left:1206px;top:225px;width:1px;height:1px;background:#1e1e1e;"></div>
<div class="a" style="left:1214px;top:223px;width:1px;height:1px;background:#1e1e1e;"></div>
<div class="a" style="left:1212px;top:223px;width:1px;height:1px;background:#1e1e1e;"></div>
<div class="a" style="left:1210px;top:223px;width:1px;height:1px;background:#1e1e1e;"></div>
<div class="a" style="left:1208px;top:223px;width:1px;height:1px;background:#1e1e1e;"></div>
<div class="a" style="left:1214px;top:221px;width:1px;height:1px;background:#1e1e1e;"></div>
<div class="a" style="left:1212px;top:221px;width:1px;height:1px;background:#1e1e1e;"></div>
<div class="a" style="left:1210px;top:221px;width:1px;height:1px;background:#1e1e1e;"></div>
<div class="a" style="left:1214px;top:219px;width:1px;height:1px;background:#1e1e1e;"></div>
<div class="a" style="left:1212px;top:219px;width:1px;height:1px;background:#1e1e1e;"></div>
<div class="a" style="left:1214px;top:217px;width:1px;height:1px;background:#1e1e1e;"></div>
<div class="a" style="left:977px;top:231px;width:241px;height:17px;background:#3a3a3a;"></div>
<div class="a" style="left:977px;top:248px;width:241px;height:1px;background:#5a5a5a;"></div>
<div class="a" style="left:977px;top:231px;width:74px;height:17px;background:#3c3c3c;border-right:1px solid #2e2e2e"></div>
<div class="a" style="left:1051px;top:231px;width:42px;height:18px;background:linear-gradient(#606060 0,#606060 1px,#535353 1px);"></div>
<div class="t" style="left:984px;top:235px;font-size:9.5px;color:#a8a8a8;font-weight:bold">Adjustments</div>
<div class="t" style="left:1058px;top:235px;font-size:9.5px;color:#f0f0f0;font-weight:bold">Styles</div>
<svg style="left:1199px;top:235px;" width="15" height="10" viewBox="0 0 15 10"><path d="M0 2.5H6L3 6Z" fill="#d0d0d0"/><path d="M0.5 1.5H5.5" stroke="#222" stroke-width="1"/><path d="M6 0.5H14.5" stroke="#222" stroke-width="1"/><path d="M6 1.5H14.5M6 3.5H14.5M6 5.5H14.5M6 7.5H14.5" stroke="#e0e0e0" stroke-width="1"/></svg>
<div class="a" style="left:977px;top:251px;width:241px;height:17px;background:#3a3a3a;"></div>
<div class="a" style="left:977px;top:251px;width:43px;height:18px;background:linear-gradient(#606060 0,#606060 1px,#535353 1px);"></div>
<div class="a" style="left:1020px;top:251px;width:57px;height:17px;background:#3c3c3c;border-right:1px solid #2e2e2e;border-left:1px solid #2e2e2e"></div>
<div class="a" style="left:1077px;top:251px;width:41px;height:17px;background:#3c3c3c;border-right:1px solid #2e2e2e"></div>
<div class="t" style="left:984px;top:255px;font-size:9.5px;color:#f0f0f0;font-weight:bold">Layers</div>
<div class="t" style="left:1027px;top:255px;font-size:9.5px;color:#a8a8a8;font-weight:bold">Channels</div>
<div class="t" style="left:1084px;top:255px;font-size:9.5px;color:#a8a8a8;font-weight:bold">Paths</div>
<svg style="left:1199px;top:255px;" width="15" height="10" viewBox="0 0 15 10"><path d="M0 2.5H6L3 6Z" fill="#d0d0d0"/><path d="M0.5 1.5H5.5" stroke="#222" stroke-width="1"/><path d="M6 0.5H14.5" stroke="#222" stroke-width="1"/><path d="M6 1.5H14.5M6 3.5H14.5M6 5.5H14.5M6 7.5H14.5" stroke="#e0e0e0" stroke-width="1"/></svg>
<div class="a" style="left:977px;top:268px;width:241px;height:512px;background:linear-gradient(#5c5c5c 0,#5c5c5c 1px,#535353 1px);"></div>
<div class="a" style="left:982px;top:274px;width:89px;height:19px;background:linear-gradient(#646464,#4e4e4e);border:1px solid #2c2c2c;border-radius:3px"></div>
<svg style="left:988px;top:278px;" width="11" height="11" viewBox="0 0 11 11"><circle cx="6.5" cy="4.5" r="3.5" fill="none" stroke="#e0e0e0" stroke-width="1.4"/><path d="M4 7L0.8 10.2" stroke="#e0e0e0" stroke-width="1.8"/></svg>
<div class="t" style="left:1003px;top:278px;font-size:10.5px;color:#f0f0f0;">Kind</div>
<svg style="left:1062px;top:278px;" width="6" height="12" viewBox="0 0 6 12"><path d="M0 5L3 1L6 5ZM0 7L3 11L6 7Z" fill="#e8e8e8"/></svg>
<svg style="left:1082px;top:276px;" width="14" height="13" viewBox="0 0 14 13"><rect x="0.5" y="0.5" width="13" height="11" fill="none" stroke="#d8d8d8"/><path d="M2 10L5 6L7 8L9 5L12 10Z" fill="#d8d8d8"/><circle cx="10" cy="3" r="1" fill="#d8d8d8"/></svg>
<svg style="left:1106px;top:277px;" width="12" height="12" viewBox="0 0 12 12"><circle cx="6" cy="6" r="5.2" fill="#d8d8d8" stroke="#d8d8d8"/><path d="M9.5 2.5L2.5 9.5A5 5 0 0 0 9.5 2.5Z" fill="#535353"/></svg>
<div class="t" style="left:1131px;top:276px;font-size:14px;color:#d8d8d8;font-family:'Liberation Serif',serif;font-weight:bold">T</div>
<svg style="left:1154px;top:276px;" width="13" height="13" viewBox="0 0 13 13"><rect x="2.5" y="2.5" width="8" height="8" fill="none" stroke="#d8d8d8"/><rect x="0.5" y="0.5" width="3" height="3" fill="#d8d8d8"/><rect x="9.5" y="0.5" width="3" height="3" fill="#d8d8d8"/><rect x="0.5" y="9.5" width="3" height="3" fill="#d8d8d8"/><rect x="9.5" y="9.5" width="3" height="3" fill="#d8d8d8"/></svg>
<svg style="left:1178px;top:276px;" width="13" height="14" viewBox="0 0 13 14"><path d="M4.5 0.5H9L12.5 4V13.5H4.5Z" fill="none" stroke="#d8d8d8"/><path d="M9 .5V4H12.5" fill="none" stroke="#d8d8d8"/><rect x="0" y="7" width="7" height="7" fill="#d8d8d8"/></svg>
<div class="a" style="left:1203px;top:274px;width:11px;height:17px;background:#2c2c2c;border:1px solid #2a2a2a"></div>
<div class="a" style="left:1204px;top:275px;width:9px;height:8px;background:#8a8a8a;"></div>
<div class="a" style="left:977px;top:296px;width:241px;height:1px;background:#3a3a3a;"></div>
<div class="a" style="left:977px;top:297px;width:241px;height:1px;background:#5c5c5c;"></div>
<div class="a" style="left:982px;top:302px;width:128px;height:19px;background:linear-gradient(#5c5c5c,#4c4c4c);border:1px solid #3c3c3c;border-radius:3px"></div>
<div class="t" style="left:989px;top:306px;font-size:10.5px;color:#a8a8a8;">Normal</div>
<svg style="left:1100px;top:306px;" width="6" height="12" viewBox="0 0 6 12"><path d="M0 5L3 1L6 5ZM0 7L3 11L6 7Z" fill="#9a9a9a"/></svg>
<div class="t" style="left:1117px;top:305px;font-size:10.5px;color:#a8a8a8;">Opacity:</div>
<div class="a" style="left:1159px;top:302px;width:54px;height:18px;background:#4c4c4c;border:1px solid #3e3e3e;border-radius:2px"></div>
<div class="a" style="left:1194px;top:303px;width:18px;height:16px;background:#555;"></div>
<div class="t" style="left:1164px;top:306px;font-size:10px;color:#8a8a8a;">100%</div>
<svg style="left:1200px;top:309px;" width="7" height="4" viewBox="0 0 7 4"><path d="M0 0H7L3.5 4Z" fill="#a8a8a8"/></svg>
<div class="a" style="left:977px;top:324px;width:241px;height:1px;background:#3a3a3a;"></div>
<div class="a" style="left:977px;top:325px;width:241px;height:1px;background:#5c5c5c;"></div>
<div class="t" style="left:983px;top:334px;font-size:10.5px;color:#b8b8b8;">Lock:</div>
<svg style="left:1015px;top:332px;" width="12" height="12" viewBox="0 0 12 12"><rect width="12" height="12" fill="#7a7a7a"/><rect x="0" y="0" width="4" height="4" fill="#9a9a9a"/><rect x="8" y="0" width="4" height="4" fill="#9a9a9a"/><rect x="4" y="4" width="4" height="4" fill="#9a9a9a"/><rect x="0" y="8" width="4" height="4" fill="#9a9a9a"/><rect x="8" y="8" width="4" height="4" fill="#9a9a9a"/></svg>
<svg style="left:1036px;top:331px;" width="16" height="14" viewBox="0 0 16 14"><path d="M8 8L15 1L16 2L9.5 9.5Z" fill="#9a9a9a"/><path d="M7 7.5C4 7 2.5 9 2 11C1.5 13 .5 13.5 0 14C3 14.5 7 14 9 10.5Z" fill="#9a9a9a"/></svg>
<svg style="left:1059px;top:331px;" width="14" height="14" viewBox="0 0 14 14"><path d="M7 1V13M1 7H13" stroke="#9a9a9a" stroke-width="1.2"/><path d="M7 0L4.5 3H9.5ZM7 14L4.5 11H9.5ZM0 7L3 4.5V9.5ZM14 7L11 4.5V9.5Z" fill="#9a9a9a"/></svg>
<svg style="left:1083px;top:331px;" width="11" height="14" viewBox="0 0 11 14"><path d="M2.5 6V4C2.5 1 8.5 1 8.5 4V6" stroke="#9a9a9a" stroke-width="1.5" fill="none"/><rect x="0.5" y="6" width="10" height="7.5" fill="#9a9a9a"/></svg>
<div class="t" style="left:1139px;top:332px;font-size:10.5px;color:#b8b8b8;">Fill:</div>
<div class="a" style="left:1159px;top:330px;width:54px;height:18px;background:#4c4c4c;border:1px solid #3e3e3e;border-radius:2px"></div>
<div class="a" style="left:1194px;top:331px;width:18px;height:16px;background:#555;"></div>
<div class="t" style="left:1164px;top:334px;font-size:10px;color:#8a8a8a;">100%</div>
<svg style="left:1200px;top:337px;" width="7" height="4" viewBox="0 0 7 4"><path d="M0 0H7L3.5 4Z" fill="#a8a8a8"/></svg>
<div class="a" style="left:977px;top:353px;width:241px;height:1px;background:#3a3a3a;"></div>
<div class="a" style="left:977px;top:354px;width:225px;height:355px;background:#535353;"></div>
<div class="a" style="left:977px;top:709px;width:225px;height:70px;background:#464646;"></div>
<div class="a" style="left:1202px;top:354px;width:16px;height:425px;background:#424242;"></div>
<div class="a" style="left:977px;top:377px;width:225px;height:1px;background:#333333;"></div>
<div class="a" style="left:1007px;top:355px;width:1px;height:22px;background:#333333;"></div>
<svg style="left:986px;top:360px;" width="13" height="10" viewBox="0 0 13 10"><path d="M1.2 4.2Q6.5 -0.6 11.8 4.2" stroke="#262626" stroke-width="1.1" fill="none"/><ellipse cx="6.5" cy="5.6" rx="6" ry="3.9" fill="#d0d0d0"/><circle cx="6.3" cy="5.4" r="2.6" fill="#2e2e2e"/><rect x="6.6" y="3.6" width="1.5" height="1.5" fill="#f0f0f0"/></svg>
<svg style="left:1011px;top:363px;" width="9" height="6" viewBox="0 0 9 6"><path d="M0 0H9L4.5 6Z" fill="#e8e8e8"/></svg>
<svg style="left:1023px;top:360px;" width="18" height="12" viewBox="0 0 18 12"><defs><linearGradient id="fg" x1="0" y1="0" x2="0" y2="1"><stop offset="0" stop-color="#f0f0f0"/><stop offset="1" stop-color="#b0b0b0"/></linearGradient></defs><path d="M2 0.5H7L9 2.5H16V10H2Z" fill="#8a8a8a" stroke="#d0d0d0" stroke-width=".8"/><path d="M0 4.5H18L16.5 11.5H1.5Z" fill="url(#fg)"/></svg>
<div class="t" style="left:1052px;top:363px;font-size:10px;color:#e8e8e8;">rarity</div>
<div class="a" style="left:977px;top:404px;width:225px;height:1px;background:#333333;"></div>
<div class="a" style="left:1007px;top:378px;width:1px;height:26px;background:#333333;"></div>
<svg style="left:986px;top:386px;" width="13" height="10" viewBox="0 0 13 10"><path d="M1.2 4.2Q6.5 -0.6 11.8 4.2" stroke="#262626" stroke-width="1.1" fill="none"/><ellipse cx="6.5" cy="5.6" rx="6" ry="3.9" fill="#d0d0d0"/><circle cx="6.3" cy="5.4" r="2.6" fill="#2e2e2e"/><rect x="6.6" y="3.6" width="1.5" height="1.5" fill="#f0f0f0"/></svg>
<svg style="left:1027px;top:381px;" width="32" height="20" viewBox="0 0 32 20"><rect x="0.5" y="0.5" width="31" height="19" fill="#ffffff" stroke="#0a0a0a"/><rect x="1" y="5" width="4" height="4" fill="#cccccc"/><rect x="1" y="13" width="4" height="4" fill="#cccccc"/><rect x="5" y="1" width="4" height="4" fill="#cccccc"/><rect x="5" y="9" width="4" height="4" fill="#cccccc"/><rect x="5" y="17" width="4" height="2" fill="#cccccc"/><rect x="9" y="5" width="4" height="4" fill="#cccccc"/><rect x="9" y="13" width="4" height="4" fill="#cccccc"/><rect x="13" y="1" width="4" height="4" fill="#cccccc"/><rect x="13" y="9" width="4" height="4" fill="#cccccc"/><rect x="13" y="17" width="4" height="2" fill="#cccccc"/><rect x="17" y="5" width="4" height="4" fill="#cccccc"/><rect x="17" y="13" width="4" height="4" fill="#cccccc"/><rect x="21" y="1" width="4" height="4" fill="#cccccc"/><rect x="21" y="9" width="4" height="4" fill="#cccccc"/><rect x="21" y="17" width="4" height="2" fill="#cccccc"/><rect x="25" y="5" width="4" height="4" fill="#cccccc"/><rect x="25" y="13" width="4" height="4" fill="#cccccc"/><rect x="29" y="1" width="2" height="4" fill="#cccccc"/><rect x="29" y="9" width="2" height="4" fill="#cccccc"/><rect x="29" y="17" width="2" height="2" fill="#cccccc"/><circle cx="26" cy="6" r="3.2" fill="#a8803a"/></svg>
<div class="t" style="left:1069px;top:388px;font-size:10px;color:#e8e8e8;">SSR</div>
<div class="a" style="left:977px;top:431px;width:225px;height:1px;background:#333333;"></div>
<div class="a" style="left:1007px;top:405px;width:1px;height:26px;background:#333333;"></div>
<svg style="left:986px;top:413px;" width="13" height="10" viewBox="0 0 13 10"><path d="M1.2 4.2Q6.5 -0.6 11.8 4.2" stroke="#262626" stroke-width="1.1" fill="none"/><ellipse cx="6.5" cy="5.6" rx="6" ry="3.9" fill="#d0d0d0"/><circle cx="6.3" cy="5.4" r="2.6" fill="#2e2e2e"/><rect x="6.6" y="3.6" width="1.5" height="1.5" fill="#f0f0f0"/></svg>
<svg style="left:1027px;top:408px;" width="32" height="20" viewBox="0 0 32 20"><rect x="0.5" y="0.5" width="31" height="19" fill="#ffffff" stroke="#0a0a0a"/><rect x="1" y="5" width="4" height="4" fill="#cccccc"/><rect x="1" y="13" width="4" height="4" fill="#cccccc"/><rect x="5" y="1" width="4" height="4" fill="#cccccc"/><rect x="5" y="9" width="4" height="4" fill="#cccccc"/><rect x="5" y="17" width="4" height="2" fill="#cccccc"/><rect x="9" y="5" width="4" height="4" fill="#cccccc"/><rect x="9" y="13" width="4" height="4" fill="#cccccc"/><rect x="13" y="1" width="4" height="4" fill="#cccccc"/><rect x="13" y="9" width="4" height="4" fill="#cccccc"/><rect x="13" y="17" width="4" height="2" fill="#cccccc"/><rect x="17" y="5" width="4" height="4" fill="#cccccc"/><rect x="17" y="13" width="4" height="4" fill="#cccccc"/><rect x="21" y="1" width="4" height="4" fill="#cccccc"/><rect x="21" y="9" width="4" height="4" fill="#cccccc"/><rect x="21" y="17" width="4" height="2" fill="#cccccc"/><rect x="25" y="5" width="4" height="4" fill="#cccccc"/><rect x="25" y="13" width="4" height="4" fill="#cccccc"/><rect x="29" y="1" width="2" height="4" fill="#cccccc"/><rect x="29" y="9" width="2" height="4" fill="#cccccc"/><rect x="29" y="17" width="2" height="2" fill="#cccccc"/><circle cx="26" cy="6" r="3.6" fill="#000"/><rect x="24" y="1" width="7" height="4" fill="#000"/></svg>
<div class="t" style="left:1069px;top:415px;font-size:10px;color:#e8e8e8;">shadow</div>
<div class="a" style="left:977px;top:454px;width:225px;height:1px;background:#333333;"></div>
<div class="a" style="left:1007px;top:432px;width:1px;height:22px;background:#333333;"></div>
<svg style="left:986px;top:437px;" width="13" height="10" viewBox="0 0 13 10"><path d="M1.2 4.2Q6.5 -0.6 11.8 4.2" stroke="#262626" stroke-width="1.1" fill="none"/><ellipse cx="6.5" cy="5.6" rx="6" ry="3.9" fill="#d0d0d0"/><circle cx="6.3" cy="5.4" r="2.6" fill="#2e2e2e"/><rect x="6.6" y="3.6" width="1.5" height="1.5" fill="#f0f0f0"/></svg>
<svg style="left:1011px;top:440px;" width="9" height="6" viewBox="0 0 9 6"><path d="M0 0H9L4.5 6Z" fill="#e8e8e8"/></svg>
<svg style="left:1023px;top:437px;" width="18" height="12" viewBox="0 0 18 12"><defs><linearGradient id="fg" x1="0" y1="0" x2="0" y2="1"><stop offset="0" stop-color="#f0f0f0"/><stop offset="1" stop-color="#b0b0b0"/></linearGradient></defs><path d="M2 0.5H7L9 2.5H16V10H2Z" fill="#8a8a8a" stroke="#d0d0d0" stroke-width=".8"/><path d="M0 4.5H18L16.5 11.5H1.5Z" fill="url(#fg)"/></svg>
<div class="t" style="left:1052px;top:440px;font-size:10px;color:#e8e8e8;">border</div>
<div class="a" style="left:977px;top:481px;width:225px;height:1px;background:#333333;"></div>
<div class="a" style="left:1007px;top:455px;width:1px;height:26px;background:#333333;"></div>
<div class="a" style="left:986px;top:462px;width:12px;height:12px;background:transparent;border:1px solid #3a3a3a"></div>
<svg style="left:1027px;top:458px;" width="32" height="20" viewBox="0 0 32 20"><rect x="0.5" y="0.5" width="31" height="19" fill="#3a2a10" stroke="#0a0a0a"/><rect x="1.5" y="1.5" width="29" height="17" fill="#d8c890"/><rect x="2" y="2" width="28" height="16" fill="#f4ecd0"/><rect x="3" y="3" width="26" height="14" fill="#ffffff"/><rect x="3" y="7" width="4" height="4" fill="#cccccc"/><rect x="3" y="15" width="4" height="2" fill="#cccccc"/><rect x="7" y="3" width="4" height="4" fill="#cccccc"/><rect x="7" y="11" width="4" height="4" fill="#cccccc"/><rect x="11" y="7" width="4" height="4" fill="#cccccc"/><rect x="11" y="15" width="4" height="2" fill="#cccccc"/><rect x="15" y="3" width="4" height="4" fill="#cccccc"/><rect x="15" y="11" width="4" height="4" fill="#cccccc"/><rect x="19" y="7" width="4" height="4" fill="#cccccc"/><rect x="19" y="15" width="4" height="2" fill="#cccccc"/><rect x="23" y="3" width="4" height="4" fill="#cccccc"/><rect x="23" y="11" width="4" height="4" fill="#cccccc"/><rect x="27" y="7" width="2" height="4" fill="#cccccc"/><rect x="27" y="15" width="2" height="2" fill="#cccccc"/><circle cx="5" cy="15.5" r="2.8" fill="#7a4ac8"/></svg>
<div class="t" style="left:1069px;top:465px;font-size:10px;color:#e8e8e8;">dark</div>
<div class="a" style="left:977px;top:508px;width:225px;height:1px;background:#333333;"></div>
<div class="a" style="left:1007px;top:482px;width:1px;height:26px;background:#333333;"></div>
<div class="a" style="left:986px;top:489px;width:12px;height:12px;background:transparent;border:1px solid #3a3a3a"></div>
<svg style="left:1027px;top:485px;" width="32" height="20" viewBox="0 0 32 20"><rect x="0.5" y="0.5" width="31" height="19" fill="#3a2a10" stroke="#0a0a0a"/><rect x="1.5" y="1.5" width="29" height="17" fill="#d8c890"/><rect x="2" y="2" width="28" height="16" fill="#f4ecd0"/><rect x="3" y="3" width="26" height="14" fill="#ffffff"/><rect x="3" y="7" width="4" height="4" fill="#cccccc"/><rect x="3" y="15" width="4" height="2" fill="#cccccc"/><rect x="7" y="3" width="4" height="4" fill="#cccccc"/><rect x="7" y="11" width="4" height="4" fill="#cccccc"/><rect x="11" y="7" width="4" height="4" fill="#cccccc"/><rect x="11" y="15" width="4" height="2" fill="#cccccc"/><rect x="15" y="3" width="4" height="4" fill="#cccccc"/><rect x="15" y="11" width="4" height="4" fill="#cccccc"/><rect x="19" y="7" width="4" height="4" fill="#cccccc"/><rect x="19" y="15" width="4" height="2" fill="#cccccc"/><rect x="23" y="3" width="4" height="4" fill="#cccccc"/><rect x="23" y="11" width="4" height="4" fill="#cccccc"/><rect x="27" y="7" width="2" height="4" fill="#cccccc"/><rect x="27" y="15" width="2" height="2" fill="#cccccc"/><circle cx="5" cy="15.5" r="2.8" fill="#d8b830"/></svg>
<div class="t" style="left:1069px;top:492px;font-size:10px;color:#e8e8e8;">light</div>
<div class="a" style="left:977px;top:535px;width:225px;height:1px;background:#333333;"></div>
<div class="a" style="left:1007px;top:509px;width:1px;height:26px;background:#333333;"></div>
<svg style="left:986px;top:517px;" width="13" height="10" viewBox="0 0 13 10"><path d="M1.2 4.2Q6.5 -0.6 11.8 4.2" stroke="#262626" stroke-width="1.1" fill="none"/><ellipse cx="6.5" cy="5.6" rx="6" ry="3.9" fill="#d0d0d0"/><circle cx="6.3" cy="5.4" r="2.6" fill="#2e2e2e"/><rect x="6.6" y="3.6" width="1.5" height="1.5" fill="#f0f0f0"/></svg>
<svg style="left:1027px;top:512px;" width="32" height="20" viewBox="0 0 32 20"><rect x="0.5" y="0.5" width="31" height="19" fill="#3a2a10" stroke="#0a0a0a"/><rect x="1.5" y="1.5" width="29" height="17" fill="#d8c890"/><rect x="2" y="2" width="28" height="16" fill="#f4ecd0"/><rect x="3" y="3" width="26" height="14" fill="#ffffff"/><rect x="3" y="7" width="4" height="4" fill="#cccccc"/><rect x="3" y="15" width="4" height="2" fill="#cccccc"/><rect x="7" y="3" width="4" height="4" fill="#cccccc"/><rect x="7" y="11" width="4" height="4" fill="#cccccc"/><rect x="11" y="7" width="4" height="4" fill="#cccccc"/><rect x="11" y="15" width="4" height="2" fill="#cccccc"/><rect x="15" y="3" width="4" height="4" fill="#cccccc"/><rect x="15" y="11" width="4" height="4" fill="#cccccc"/><rect x="19" y="7" width="4" height="4" fill="#cccccc"/><rect x="19" y="15" width="4" height="2" fill="#cccccc"/><rect x="23" y="3" width="4" height="4" fill="#cccccc"/><rect x="23" y="11" width="4" height="4" fill="#cccccc"/><rect x="27" y="7" width="2" height="4" fill="#cccccc"/><rect x="27" y="15" width="2" height="2" fill="#cccccc"/><circle cx="5" cy="15.5" r="2.8" fill="#3a9a30"/></svg>
<div class="t" style="left:1069px;top:519px;font-size:10px;color:#e8e8e8;">wind</div>
<div class="a" style="left:977px;top:562px;width:225px;height:1px;background:#333333;"></div>
<div class="a" style="left:1007px;top:536px;width:1px;height:26px;background:#333333;"></div>
<div class="a" style="left:986px;top:543px;width:12px;height:12px;background:transparent;border:1px solid #3a3a3a"></div>
<svg style="left:1027px;top:539px;" width="32" height="20" viewBox="0 0 32 20"><rect x="0.5" y="0.5" width="31" height="19" fill="#3a2a10" stroke="#0a0a0a"/><rect x="1.5" y="1.5" width="29" height="17" fill="#d8c890"/><rect x="2" y="2" width="28" height="16" fill="#f4ecd0"/><rect x="3" y="3" width="26" height="14" fill="#ffffff"/><rect x="3" y="7" width="4" height="4" fill="#cccccc"/><rect x="3" y="15" width="4" height="2" fill="#cccccc"/><rect x="7" y="3" width="4" height="4" fill="#cccccc"/><rect x="7" y="11" width="4" height="4" fill="#cccccc"/><rect x="11" y="7" width="4" height="4" fill="#cccccc"/><rect x="11" y="15" width="4" height="2" fill="#cccccc"/><rect x="15" y="3" width="4" height="4" fill="#cccccc"/><rect x="15" y="11" width="4" height="4" fill="#cccccc"/><rect x="19" y="7" width="4" height="4" fill="#cccccc"/><rect x="19" y="15" width="4" height="2" fill="#cccccc"/><rect x="23" y="3" width="4" height="4" fill="#cccccc"/><rect x="23" y="11" width="4" height="4" fill="#cccccc"/><rect x="27" y="7" width="2" height="4" fill="#cccccc"/><rect x="27" y="15" width="2" height="2" fill="#cccccc"/><circle cx="5" cy="15.5" r="2.8" fill="#a8783a"/></svg>
<div class="t" style="left:1069px;top:546px;font-size:10px;color:#e8e8e8;">earth</div>
<div class="a" style="left:977px;top:589px;width:225px;height:1px;background:#333333;"></div>
<div class="a" style="left:1007px;top:563px;width:1px;height:26px;background:#333333;"></div>
<div class="a" style="left:986px;top:570px;width:12px;height:12px;background:transparent;border:1px solid #3a3a3a"></div>
<svg style="left:1027px;top:566px;" width="32" height="20" viewBox="0 0 32 20"><rect x="0.5" y="0.5" width="31" height="19" fill="#3a2a10" stroke="#0a0a0a"/><rect x="1.5" y="1.5" width="29" height="17" fill="#d8c890"/><rect x="2" y="2" width="28" height="16" fill="#f4ecd0"/><rect x="3" y="3" width="26" height="14" fill="#ffffff"/><rect x="3" y="7" width="4" height="4" fill="#cccccc"/><rect x="3" y="15" width="4" height="2" fill="#cccccc"/><rect x="7" y="3" width="4" height="4" fill="#cccccc"/><rect x="7" y="11" width="4" height="4" fill="#cccccc"/><rect x="11" y="7" width="4" height="4" fill="#cccccc"/><rect x="11" y="15" width="4" height="2" fill="#cccccc"/><rect x="15" y="3" width="4" height="4" fill="#cccccc"/><rect x="15" y="11" width="4" height="4" fill="#cccccc"/><rect x="19" y="7" width="4" height="4" fill="#cccccc"/><rect x="19" y="15" width="4" height="2" fill="#cccccc"/><rect x="23" y="3" width="4" height="4" fill="#cccccc"/><rect x="23" y="11" width="4" height="4" fill="#cccccc"/><rect x="27" y="7" width="2" height="4" fill="#cccccc"/><rect x="27" y="15" width="2" height="2" fill="#cccccc"/><circle cx="5" cy="15.5" r="2.8" fill="#3a8ad8"/></svg>
<div class="t" style="left:1069px;top:573px;font-size:10px;color:#e8e8e8;">water</div>
<div class="a" style="left:977px;top:616px;width:225px;height:1px;background:#333333;"></div>
<div class="a" style="left:1007px;top:590px;width:1px;height:26px;background:#333333;"></div>
<div class="a" style="left:986px;top:597px;width:12px;height:12px;background:transparent;border:1px solid #3a3a3a"></div>
<svg style="left:1027px;top:593px;" width="32" height="20" viewBox="0 0 32 20"><rect x="0.5" y="0.5" width="31" height="19" fill="#3a2a10" stroke="#0a0a0a"/><rect x="1.5" y="1.5" width="29" height="17" fill="#d8c890"/><rect x="2" y="2" width="28" height="16" fill="#f4ecd0"/><rect x="3" y="3" width="26" height="14" fill="#ffffff"/><rect x="3" y="7" width="4" height="4" fill="#cccccc"/><rect x="3" y="15" width="4" height="2" fill="#cccccc"/><rect x="7" y="3" width="4" height="4" fill="#cccccc"/><rect x="7" y="11" width="4" height="4" fill="#cccccc"/><rect x="11" y="7" width="4" height="4" fill="#cccccc"/><rect x="11" y="15" width="4" height="2" fill="#cccccc"/><rect x="15" y="3" width="4" height="4" fill="#cccccc"/><rect x="15" y="11" width="4" height="4" fill="#cccccc"/><rect x="19" y="7" width="4" height="4" fill="#cccccc"/><rect x="19" y="15" width="4" height="2" fill="#cccccc"/><rect x="23" y="3" width="4" height="4" fill="#cccccc"/><rect x="23" y="11" width="4" height="4" fill="#cccccc"/><rect x="27" y="7" width="2" height="4" fill="#cccccc"/><rect x="27" y="15" width="2" height="2" fill="#cccccc"/><circle cx="5" cy="15.5" r="2.8" fill="#d86a30"/></svg>
<div class="t" style="left:1069px;top:600px;font-size:10px;color:#e8e8e8;">fire</div>
<div class="a" style="left:1008px;top:617px;width:183px;height:27px;background:#6b7e96;"></div>
<div class="a" style="left:977px;top:617px;width:30px;height:27px;background:#535353;"></div>
<div class="a" style="left:1007px;top:617px;width:1px;height:27px;background:#333333;"></div>
<div class="a" style="left:1191px;top:617px;width:11px;height:27px;background:linear-gradient(90deg,#a0a8b0,#c0c4c8,#a0a8b0);"></div>
<svg style="left:1193px;top:627px;" width="7" height="5" viewBox="0 0 7 5"><path d="M0 4.5L3.5 0.5L7 4.5Z" fill="#2a2a2a"/></svg>
<div class="a" style="left:986px;top:624px;width:12px;height:12px;background:transparent;border:1px solid #3a3a3a"></div>
<svg style="left:1008px;top:618px;" width="38" height="25" viewBox="0 0 38 25"><defs><linearGradient id="ph" x1="0" y1="0" x2="1" y2="0"><stop offset="0" stop-color="#ece4d8"/><stop offset=".25" stop-color="#c8ac80"/><stop offset=".5" stop-color="#7a5a48"/><stop offset=".65" stop-color="#4a3430"/><stop offset=".85" stop-color="#d8c8a8"/><stop offset="1" stop-color="#e8dcc8"/></linearGradient></defs><path d="M1 8V1H13M24 1H36V8M1 16V23H13M24 23H36V16" stroke="#f4f4f4" stroke-width="1.6" fill="none"/><path d="M3.5 2.5H34.5V8.5H21.5V21.5H3.5Z" fill="url(#ph)" stroke="#101010" stroke-width="1.3"/><circle cx="15.5" cy="12.5" r="2.6" fill="#ecd8d0"/><path d="M12 4L19 3L17 10Z" fill="#3a2620"/><rect x="26" y="10" width="6" height="11" fill="#d8dce0"/><path d="M29.5 9.5L33 13" stroke="#111" stroke-width="1.2"/><rect x="22.5" y="16" width="5.5" height="6.5" fill="#d8dce0" stroke="#222" stroke-width=".8"/><rect x="27" y="15" width="2.5" height="4" fill="#333"/></svg>
<div class="t" style="left:1053px;top:628px;font-size:10px;color:#f0f0f0;letter-spacing:-0.5px">3990156000</div>
<div class="t" style="left:1176px;top:622px;font-size:15px;color:#e0e0e0;font-family:'Liberation Serif',serif"><i><b>fx</b></i></div>
<div class="a" style="left:977px;top:644px;width:225px;height:37px;background:#535353;"></div>
<div class="a" style="left:1007px;top:644px;width:1px;height:37px;background:#333333;"></div>
<svg style="left:1027px;top:648px;" width="13" height="10" viewBox="0 0 13 10"><path d="M1.2 4.2Q6.5 -0.6 11.8 4.2" stroke="#262626" stroke-width="1.1" fill="none"/><ellipse cx="6.5" cy="5.6" rx="6" ry="3.9" fill="#8a8a8a"/><circle cx="6.3" cy="5.4" r="2.6" fill="#3e3e3e"/><rect x="6.6" y="3.6" width="1.5" height="1.5" fill="#f0f0f0"/></svg>
<div class="t" style="left:1046px;top:649px;font-size:10px;color:#e8e8e8;">Effects</div>
<svg style="left:1044px;top:667px;" width="13" height="10" viewBox="0 0 13 10"><path d="M1.2 4.2Q6.5 -0.6 11.8 4.2" stroke="#262626" stroke-width="1.1" fill="none"/><ellipse cx="6.5" cy="5.6" rx="6" ry="3.9" fill="#8a8a8a"/><circle cx="6.3" cy="5.4" r="2.6" fill="#3e3e3e"/><rect x="6.6" y="3.6" width="1.5" height="1.5" fill="#f0f0f0"/></svg>
<div class="t" style="left:1063px;top:668px;font-size:10px;color:#e8e8e8;">Outer Glow</div>
<div class="a" style="left:977px;top:681px;width:225px;height:1px;background:#333333;"></div>
<div class="a" style="left:1007px;top:682px;width:1px;height:27px;background:#333333;"></div>
<svg style="left:986px;top:690px;" width="13" height="10" viewBox="0 0 13 10"><path d="M1.2 4.2Q6.5 -0.6 11.8 4.2" stroke="#262626" stroke-width="1.1" fill="none"/><ellipse cx="6.5" cy="5.6" rx="6" ry="3.9" fill="#d0d0d0"/><circle cx="6.3" cy="5.4" r="2.6" fill="#2e2e2e"/><rect x="6.6" y="3.6" width="1.5" height="1.5" fill="#f0f0f0"/></svg>
<svg style="left:1011px;top:685px;" width="32" height="20" viewBox="0 0 32 20"><rect x="0.5" y="0.5" width="31" height="20" fill="#f6ba7a" stroke="#0a0a0a"/></svg>
<div class="t" style="left:1053px;top:693px;font-size:10px;color:#e8e8e8;">Layer 6</div>
<div class="a" style="left:977px;top:709px;width:225px;height:1px;background:#333333;"></div>
<div class="a" style="left:977px;top:779px;width:241px;height:2px;background:#3a3a3a;"></div>
<div class="a" style="left:977px;top:781px;width:241px;height:19px;background:linear-gradient(#5e5e5e 0,#5e5e5e 1px,#535353 1px);"></div>
<svg style="left:1014px;top:786px;" width="14" height="10" viewBox="0 0 14 10"><path d="M5.5 1.5H3.5C2 1.5 1 3 1 4.8C1 6.6 2 8 3.5 8H5.5M8.5 1.5H10.5C12 1.5 13 3 13 4.8C13 6.6 12 8 10.5 8H8.5" stroke="#a8a8a8" stroke-width="2" fill="none"/><path d="M4.5 4.8H9.5" stroke="#a8a8a8" stroke-width="1.8"/></svg>
<div class="t" style="left:1042px;top:783px;font-size:14px;color:#c8c8c8;font-family:'Liberation Serif',serif"><i>fx</i></div>
<svg style="left:1054px;top:795px;" width="4" height="3" viewBox="0 0 4 3"><path d="M0 0H4L2 3Z" fill="#c8c8c8"/></svg>
<svg style="left:1069px;top:785px;" width="13" height="11" viewBox="0 0 13 11"><rect width="13" height="11" fill="#c8c8c8"/><circle cx="6.5" cy="5.5" r="2.5" fill="#353535"/></svg>
<svg style="left:1096px;top:785px;" width="16" height="12" viewBox="0 0 16 12"><circle cx="5.5" cy="5.5" r="5" fill="#c8c8c8"/><path d="M8.5 2L2.5 9A4.5 4.5 0 0 0 8.5 2Z" fill="#535353"/><path d="M12 10H16L14 12Z" fill="#c8c8c8"/></svg>
<svg style="left:1123px;top:785px;" width="13" height="11" viewBox="0 0 13 11"><path d="M0 1H5L6.5 2.5H13V11H0Z" fill="#c8c8c8"/></svg>
<svg style="left:1150px;top:785px;" width="12" height="12" viewBox="0 0 12 12"><path d="M3 0.5H11.5V11.5H3L0.5 9V3Z" fill="#d0d0d0"/><path d="M0 8L4 8V12" fill="#535353" stroke="#535353"/></svg>
<svg style="left:1177px;top:784px;" width="12" height="13" viewBox="0 0 12 13"><path d="M0.5 2.5H11.5M4 2V0.5H8V2" stroke="#d8d8d8" stroke-width="1.4" fill="none"/><path d="M1.5 4H10.5L9.8 12.5H2.2Z" fill="#d8d8d8"/><path d="M3.8 5.5V11.5M6 5.5V11.5M8.2 5.5V11.5" stroke="#555" stroke-width="1"/></svg>
<div class="a" style="left:1217px;top:75px;width:1px;height:725px;background:#383838;"></div>
</body></html>
